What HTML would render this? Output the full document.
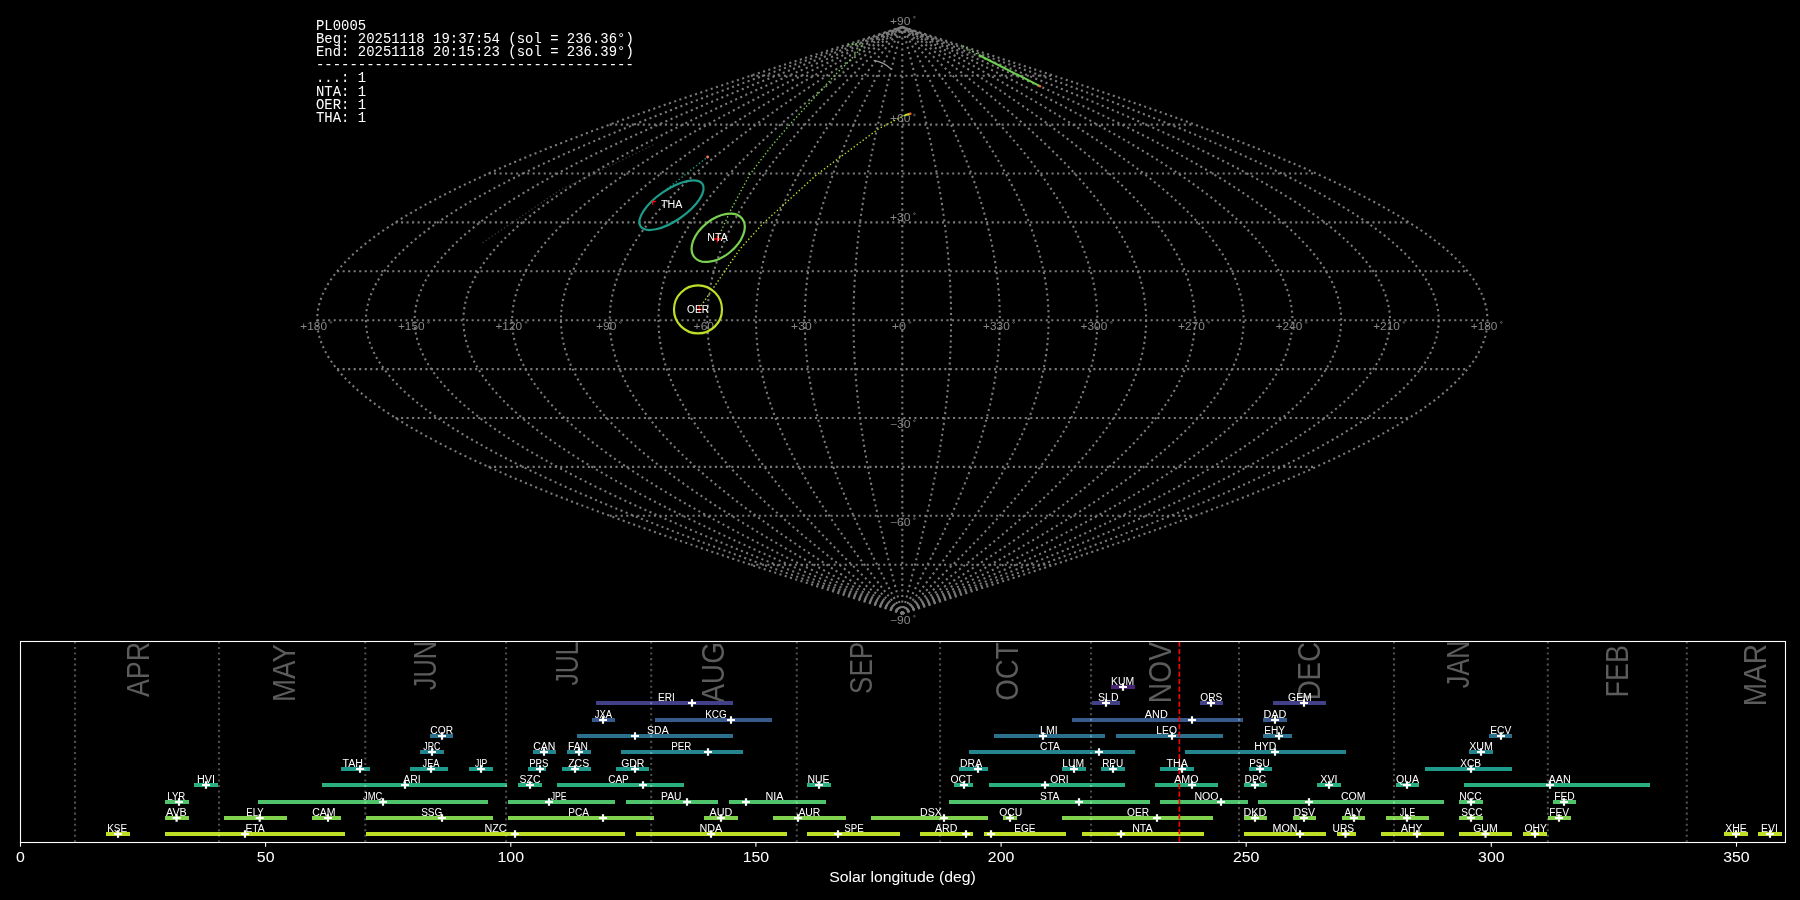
<!DOCTYPE html>
<html><head><meta charset="utf-8"><style>
html,body{margin:0;padding:0;background:#000;width:1800px;height:900px;overflow:hidden}
svg{display:block}
svg{will-change:transform}
</style></head><body>
<svg width="1800" height="900" viewBox="0 0 1800 900">
<rect width="1800" height="900" fill="#000"/>
<g fill="none" stroke="#7a7a7a" stroke-width="2.08" stroke-dasharray="2.08 3.44">
<path d="M902.3,613.6 912.5,610.3 922.7,607.1 932.9,603.8 943.1,600.6 953.3,597.3 963.5,594.0 973.6,590.8 983.7,587.5 993.8,584.3 1003.9,581.0 1014.0,577.7 1024.0,574.5 1033.9,571.2 1043.9,568.0 1053.8,564.7 1063.6,561.4 1073.4,558.2 1083.1,554.9 1092.8,551.7 1102.4,548.4 1112.0,545.1 1121.5,541.9 1130.9,538.6 1140.3,535.4 1149.6,532.1 1158.8,528.8 1168.0,525.6 1177.0,522.3 1186.0,519.1 1194.9,515.8 1203.7,512.5 1212.4,509.3 1221.0,506.0 1229.5,502.8 1237.9,499.5 1246.3,496.2 1254.5,493.0 1262.6,489.7 1270.6,486.5 1278.4,483.2 1286.2,479.9 1293.9,476.7 1301.4,473.4 1308.8,470.2 1316.1,466.9 1323.2,463.6 1330.3,460.4 1337.2,457.1 1343.9,453.9 1350.6,450.6 1357.1,447.3 1363.4,444.1 1369.6,440.8 1375.7,437.6 1381.7,434.3 1387.4,431.0 1393.1,427.8 1398.6,424.5 1403.9,421.3 1409.1,418.0 1414.1,414.7 1419.0,411.5 1423.7,408.2 1428.3,405.0 1432.7,401.7 1436.9,398.4 1441.0,395.2 1444.9,391.9 1448.6,388.7 1452.2,385.4 1455.6,382.1 1458.8,378.9 1461.9,375.6 1464.8,372.4 1467.5,369.1 1470.1,365.8 1472.5,362.6 1474.7,359.3 1476.7,356.1 1478.6,352.8 1480.3,349.5 1481.8,346.3 1483.1,343.0 1484.3,339.8 1485.3,336.5 1486.1,333.2 1486.7,330.0 1487.1,326.7 1487.4,323.5 1487.5,320.2 1487.4,316.9 1487.1,313.7 1486.7,310.4 1486.1,307.2 1485.3,303.9 1484.3,300.6 1483.1,297.4 1481.8,294.1 1480.3,290.9 1478.6,287.6 1476.7,284.3 1474.7,281.1 1472.5,277.8 1470.1,274.6 1467.5,271.3 1464.8,268.0 1461.9,264.8 1458.8,261.5 1455.6,258.3 1452.2,255.0 1448.6,251.7 1444.9,248.5 1441.0,245.2 1436.9,242.0 1432.7,238.7 1428.3,235.4 1423.7,232.2 1419.0,228.9 1414.1,225.7 1409.1,222.4 1403.9,219.1 1398.6,215.9 1393.1,212.6 1387.4,209.4 1381.7,206.1 1375.7,202.8 1369.6,199.6 1363.4,196.3 1357.1,193.1 1350.6,189.8 1343.9,186.5 1337.2,183.3 1330.3,180.0 1323.2,176.8 1316.1,173.5 1308.8,170.2 1301.4,167.0 1293.9,163.7 1286.2,160.5 1278.4,157.2 1270.6,153.9 1262.6,150.7 1254.5,147.4 1246.3,144.2 1237.9,140.9 1229.5,137.6 1221.0,134.4 1212.4,131.1 1203.7,127.9 1194.9,124.6 1186.0,121.3 1177.0,118.1 1168.0,114.8 1158.8,111.6 1149.6,108.3 1140.3,105.0 1130.9,101.8 1121.5,98.5 1112.0,95.3 1102.4,92.0 1092.8,88.7 1083.1,85.5 1073.4,82.2 1063.6,79.0 1053.8,75.7 1043.9,72.4 1033.9,69.2 1024.0,65.9 1014.0,62.7 1003.9,59.4 993.8,56.1 983.7,52.9 973.6,49.6 963.5,46.4 953.3,43.1 943.1,39.8 932.9,36.6 922.7,33.3 912.5,30.1 902.3,26.8"/>
<path d="M902.3,613.6 911.7,610.3 921.0,607.1 930.4,603.8 939.7,600.6 949.1,597.3 958.4,594.0 967.7,590.8 977.0,587.5 986.2,584.3 995.4,581.0 1004.7,577.7 1013.8,574.5 1023.0,571.2 1032.1,568.0 1041.1,564.7 1050.2,561.4 1059.1,558.2 1068.1,554.9 1076.9,551.7 1085.8,548.4 1094.5,545.1 1103.2,541.9 1111.9,538.6 1120.5,535.4 1129.0,532.1 1137.4,528.8 1145.8,525.6 1154.1,522.3 1162.4,519.1 1170.5,515.8 1178.6,512.5 1186.6,509.3 1194.5,506.0 1202.3,502.8 1210.0,499.5 1217.6,496.2 1225.1,493.0 1232.6,489.7 1239.9,486.5 1247.1,483.2 1254.2,479.9 1261.2,476.7 1268.1,473.4 1274.9,470.2 1281.6,466.9 1288.2,463.6 1294.6,460.4 1300.9,457.1 1307.1,453.9 1313.2,450.6 1319.2,447.3 1325.0,444.1 1330.7,440.8 1336.3,437.6 1341.7,434.3 1347.0,431.0 1352.2,427.8 1357.2,424.5 1362.1,421.3 1366.8,418.0 1371.5,414.7 1375.9,411.5 1380.2,408.2 1384.4,405.0 1388.5,401.7 1392.3,398.4 1396.1,395.2 1399.7,391.9 1403.1,388.7 1406.4,385.4 1409.5,382.1 1412.5,378.9 1415.3,375.6 1417.9,372.4 1420.4,369.1 1422.8,365.8 1425.0,362.6 1427.0,359.3 1428.9,356.1 1430.6,352.8 1432.1,349.5 1433.5,346.3 1434.7,343.0 1435.8,339.8 1436.7,336.5 1437.4,333.2 1438.0,330.0 1438.4,326.7 1438.6,323.5 1438.7,320.2 1438.6,316.9 1438.4,313.7 1438.0,310.4 1437.4,307.2 1436.7,303.9 1435.8,300.6 1434.7,297.4 1433.5,294.1 1432.1,290.9 1430.6,287.6 1428.9,284.3 1427.0,281.1 1425.0,277.8 1422.8,274.6 1420.4,271.3 1417.9,268.0 1415.3,264.8 1412.5,261.5 1409.5,258.3 1406.4,255.0 1403.1,251.7 1399.7,248.5 1396.1,245.2 1392.3,242.0 1388.5,238.7 1384.4,235.4 1380.2,232.2 1375.9,228.9 1371.5,225.7 1366.8,222.4 1362.1,219.1 1357.2,215.9 1352.2,212.6 1347.0,209.4 1341.7,206.1 1336.3,202.8 1330.7,199.6 1325.0,196.3 1319.2,193.1 1313.2,189.8 1307.1,186.5 1300.9,183.3 1294.6,180.0 1288.2,176.8 1281.6,173.5 1274.9,170.2 1268.1,167.0 1261.2,163.7 1254.2,160.5 1247.1,157.2 1239.9,153.9 1232.6,150.7 1225.1,147.4 1217.6,144.2 1210.0,140.9 1202.3,137.6 1194.5,134.4 1186.6,131.1 1178.6,127.9 1170.5,124.6 1162.4,121.3 1154.1,118.1 1145.8,114.8 1137.4,111.6 1129.0,108.3 1120.5,105.0 1111.9,101.8 1103.2,98.5 1094.5,95.3 1085.8,92.0 1076.9,88.7 1068.1,85.5 1059.1,82.2 1050.2,79.0 1041.1,75.7 1032.1,72.4 1023.0,69.2 1013.8,65.9 1004.7,62.7 995.4,59.4 986.2,56.1 977.0,52.9 967.7,49.6 958.4,46.4 949.1,43.1 939.7,39.8 930.4,36.6 921.0,33.3 911.7,30.1 902.3,26.8"/>
<path d="M902.3,613.6 910.8,610.3 919.3,607.1 927.8,603.8 936.3,600.6 944.8,597.3 953.3,594.0 961.7,590.8 970.2,587.5 978.6,584.3 987.0,581.0 995.3,577.7 1003.7,574.5 1012.0,571.2 1020.3,568.0 1028.5,564.7 1036.7,561.4 1044.9,558.2 1053.0,554.9 1061.1,551.7 1069.1,548.4 1077.1,545.1 1085.0,541.9 1092.8,538.6 1100.6,535.4 1108.4,532.1 1116.1,528.8 1123.7,525.6 1131.2,522.3 1138.7,519.1 1146.1,515.8 1153.5,512.5 1160.7,509.3 1167.9,506.0 1175.0,502.8 1182.0,499.5 1188.9,496.2 1195.8,493.0 1202.5,489.7 1209.2,486.5 1215.8,483.2 1222.2,479.9 1228.6,476.7 1234.9,473.4 1241.1,470.2 1247.1,466.9 1253.1,463.6 1258.9,460.4 1264.7,457.1 1270.3,453.9 1275.9,450.6 1281.3,447.3 1286.6,444.1 1291.8,440.8 1296.8,437.6 1301.8,434.3 1306.6,431.0 1311.3,427.8 1315.9,424.5 1320.3,421.3 1324.6,418.0 1328.8,414.7 1332.9,411.5 1336.8,408.2 1340.6,405.0 1344.3,401.7 1347.8,398.4 1351.2,395.2 1354.4,391.9 1357.6,388.7 1360.5,385.4 1363.4,382.1 1366.1,378.9 1368.6,375.6 1371.1,372.4 1373.3,369.1 1375.5,365.8 1377.5,362.6 1379.3,359.3 1381.0,356.1 1382.5,352.8 1383.9,349.5 1385.2,346.3 1386.3,343.0 1387.3,339.8 1388.1,336.5 1388.8,333.2 1389.3,330.0 1389.7,326.7 1389.9,323.5 1389.9,320.2 1389.9,316.9 1389.7,313.7 1389.3,310.4 1388.8,307.2 1388.1,303.9 1387.3,300.6 1386.3,297.4 1385.2,294.1 1383.9,290.9 1382.5,287.6 1381.0,284.3 1379.3,281.1 1377.5,277.8 1375.5,274.6 1373.3,271.3 1371.1,268.0 1368.6,264.8 1366.1,261.5 1363.4,258.3 1360.5,255.0 1357.6,251.7 1354.4,248.5 1351.2,245.2 1347.8,242.0 1344.3,238.7 1340.6,235.4 1336.8,232.2 1332.9,228.9 1328.8,225.7 1324.6,222.4 1320.3,219.1 1315.9,215.9 1311.3,212.6 1306.6,209.4 1301.8,206.1 1296.8,202.8 1291.8,199.6 1286.6,196.3 1281.3,193.1 1275.9,189.8 1270.3,186.5 1264.7,183.3 1258.9,180.0 1253.1,176.8 1247.1,173.5 1241.1,170.2 1234.9,167.0 1228.6,163.7 1222.2,160.5 1215.8,157.2 1209.2,153.9 1202.5,150.7 1195.8,147.4 1188.9,144.2 1182.0,140.9 1175.0,137.6 1167.9,134.4 1160.7,131.1 1153.5,127.9 1146.1,124.6 1138.7,121.3 1131.2,118.1 1123.7,114.8 1116.1,111.6 1108.4,108.3 1100.6,105.0 1092.8,101.8 1085.0,98.5 1077.1,95.3 1069.1,92.0 1061.1,88.7 1053.0,85.5 1044.9,82.2 1036.7,79.0 1028.5,75.7 1020.3,72.4 1012.0,69.2 1003.7,65.9 995.3,62.7 987.0,59.4 978.6,56.1 970.2,52.9 961.7,49.6 953.3,46.4 944.8,43.1 936.3,39.8 927.8,36.6 919.3,33.3 910.8,30.1 902.3,26.8"/>
<path d="M902.3,613.6 910.0,610.3 917.6,607.1 925.3,603.8 932.9,600.6 940.6,597.3 948.2,594.0 955.8,590.8 963.4,587.5 971.0,584.3 978.5,581.0 986.0,577.7 993.5,574.5 1001.0,571.2 1008.5,568.0 1015.9,564.7 1023.3,561.4 1030.6,558.2 1037.9,554.9 1045.2,551.7 1052.4,548.4 1059.6,545.1 1066.7,541.9 1073.8,538.6 1080.8,535.4 1087.8,532.1 1094.7,528.8 1101.5,525.6 1108.3,522.3 1115.1,519.1 1121.7,515.8 1128.3,512.5 1134.9,509.3 1141.3,506.0 1147.7,502.8 1154.0,499.5 1160.3,496.2 1166.4,493.0 1172.5,489.7 1178.5,486.5 1184.4,483.2 1190.2,479.9 1196.0,476.7 1201.6,473.4 1207.2,470.2 1212.6,466.9 1218.0,463.6 1223.3,460.4 1228.5,457.1 1233.5,453.9 1238.5,450.6 1243.4,447.3 1248.1,444.1 1252.8,440.8 1257.4,437.6 1261.8,434.3 1266.2,431.0 1270.4,427.8 1274.5,424.5 1278.5,421.3 1282.4,418.0 1286.2,414.7 1289.8,411.5 1293.3,408.2 1296.8,405.0 1300.1,401.7 1303.2,398.4 1306.3,395.2 1309.2,391.9 1312.0,388.7 1314.7,385.4 1317.3,382.1 1319.7,378.9 1322.0,375.6 1324.2,372.4 1326.2,369.1 1328.1,365.8 1329.9,362.6 1331.6,359.3 1333.1,356.1 1334.5,352.8 1335.8,349.5 1336.9,346.3 1337.9,343.0 1338.8,339.8 1339.5,336.5 1340.1,333.2 1340.6,330.0 1340.9,326.7 1341.1,323.5 1341.2,320.2 1341.1,316.9 1340.9,313.7 1340.6,310.4 1340.1,307.2 1339.5,303.9 1338.8,300.6 1337.9,297.4 1336.9,294.1 1335.8,290.9 1334.5,287.6 1333.1,284.3 1331.6,281.1 1329.9,277.8 1328.1,274.6 1326.2,271.3 1324.2,268.0 1322.0,264.8 1319.7,261.5 1317.3,258.3 1314.7,255.0 1312.0,251.7 1309.2,248.5 1306.3,245.2 1303.2,242.0 1300.1,238.7 1296.8,235.4 1293.3,232.2 1289.8,228.9 1286.2,225.7 1282.4,222.4 1278.5,219.1 1274.5,215.9 1270.4,212.6 1266.2,209.4 1261.8,206.1 1257.4,202.8 1252.8,199.6 1248.1,196.3 1243.4,193.1 1238.5,189.8 1233.5,186.5 1228.5,183.3 1223.3,180.0 1218.0,176.8 1212.6,173.5 1207.2,170.2 1201.6,167.0 1196.0,163.7 1190.2,160.5 1184.4,157.2 1178.5,153.9 1172.5,150.7 1166.4,147.4 1160.3,144.2 1154.0,140.9 1147.7,137.6 1141.3,134.4 1134.9,131.1 1128.3,127.9 1121.7,124.6 1115.1,121.3 1108.3,118.1 1101.5,114.8 1094.7,111.6 1087.8,108.3 1080.8,105.0 1073.8,101.8 1066.7,98.5 1059.6,95.3 1052.4,92.0 1045.2,88.7 1037.9,85.5 1030.6,82.2 1023.3,79.0 1015.9,75.7 1008.5,72.4 1001.0,69.2 993.5,65.9 986.0,62.7 978.5,59.4 971.0,56.1 963.4,52.9 955.8,49.6 948.2,46.4 940.6,43.1 932.9,39.8 925.3,36.6 917.6,33.3 910.0,30.1 902.3,26.8"/>
<path d="M902.3,613.6 909.1,610.3 915.9,607.1 922.7,603.8 929.5,600.6 936.3,597.3 943.1,594.0 949.8,590.8 956.6,587.5 963.3,584.3 970.0,581.0 976.7,577.7 983.4,574.5 990.1,571.2 996.7,568.0 1003.3,564.7 1009.8,561.4 1016.4,558.2 1022.9,554.9 1029.3,551.7 1035.7,548.4 1042.1,545.1 1048.4,541.9 1054.7,538.6 1061.0,535.4 1067.2,532.1 1073.3,528.8 1079.4,525.6 1085.5,522.3 1091.4,519.1 1097.4,515.8 1103.2,512.5 1109.0,509.3 1114.8,506.0 1120.5,502.8 1126.1,499.5 1131.6,496.2 1137.1,493.0 1142.5,489.7 1147.8,486.5 1153.1,483.2 1158.2,479.9 1163.3,476.7 1168.4,473.4 1173.3,470.2 1178.2,466.9 1182.9,463.6 1187.6,460.4 1192.2,457.1 1196.7,453.9 1201.1,450.6 1205.5,447.3 1209.7,444.1 1213.9,440.8 1217.9,437.6 1221.9,434.3 1225.7,431.0 1229.5,427.8 1233.1,424.5 1236.7,421.3 1240.2,418.0 1243.5,414.7 1246.8,411.5 1249.9,408.2 1252.9,405.0 1255.9,401.7 1258.7,398.4 1261.4,395.2 1264.0,391.9 1266.5,388.7 1268.9,385.4 1271.2,382.1 1273.3,378.9 1275.4,375.6 1277.3,372.4 1279.1,369.1 1280.8,365.8 1282.4,362.6 1283.9,359.3 1285.3,356.1 1286.5,352.8 1287.6,349.5 1288.6,346.3 1289.5,343.0 1290.3,339.8 1290.9,336.5 1291.5,333.2 1291.9,330.0 1292.2,326.7 1292.4,323.5 1292.4,320.2 1292.4,316.9 1292.2,313.7 1291.9,310.4 1291.5,307.2 1290.9,303.9 1290.3,300.6 1289.5,297.4 1288.6,294.1 1287.6,290.9 1286.5,287.6 1285.3,284.3 1283.9,281.1 1282.4,277.8 1280.8,274.6 1279.1,271.3 1277.3,268.0 1275.4,264.8 1273.3,261.5 1271.2,258.3 1268.9,255.0 1266.5,251.7 1264.0,248.5 1261.4,245.2 1258.7,242.0 1255.9,238.7 1252.9,235.4 1249.9,232.2 1246.8,228.9 1243.5,225.7 1240.2,222.4 1236.7,219.1 1233.1,215.9 1229.5,212.6 1225.7,209.4 1221.9,206.1 1217.9,202.8 1213.9,199.6 1209.7,196.3 1205.5,193.1 1201.1,189.8 1196.7,186.5 1192.2,183.3 1187.6,180.0 1182.9,176.8 1178.2,173.5 1173.3,170.2 1168.4,167.0 1163.3,163.7 1158.2,160.5 1153.1,157.2 1147.8,153.9 1142.5,150.7 1137.1,147.4 1131.6,144.2 1126.1,140.9 1120.5,137.6 1114.8,134.4 1109.0,131.1 1103.2,127.9 1097.4,124.6 1091.4,121.3 1085.5,118.1 1079.4,114.8 1073.3,111.6 1067.2,108.3 1061.0,105.0 1054.7,101.8 1048.4,98.5 1042.1,95.3 1035.7,92.0 1029.3,88.7 1022.9,85.5 1016.4,82.2 1009.8,79.0 1003.3,75.7 996.7,72.4 990.1,69.2 983.4,65.9 976.7,62.7 970.0,59.4 963.3,56.1 956.6,52.9 949.8,49.6 943.1,46.4 936.3,43.1 929.5,39.8 922.7,36.6 915.9,33.3 909.1,30.1 902.3,26.8"/>
<path d="M902.3,613.6 908.3,610.3 914.2,607.1 920.2,603.8 926.1,600.6 932.1,597.3 938.0,594.0 943.9,590.8 949.8,587.5 955.7,584.3 961.6,581.0 967.4,577.7 973.3,574.5 979.1,571.2 984.9,568.0 990.6,564.7 996.4,561.4 1002.1,558.2 1007.8,554.9 1013.4,551.7 1019.1,548.4 1024.6,545.1 1030.2,541.9 1035.7,538.6 1041.1,535.4 1046.6,532.1 1051.9,528.8 1057.3,525.6 1062.6,522.3 1067.8,519.1 1073.0,515.8 1078.1,512.5 1083.2,509.3 1088.2,506.0 1093.2,502.8 1098.1,499.5 1102.9,496.2 1107.7,493.0 1112.5,489.7 1117.1,486.5 1121.7,483.2 1126.2,479.9 1130.7,476.7 1135.1,473.4 1139.4,470.2 1143.7,466.9 1147.9,463.6 1152.0,460.4 1156.0,457.1 1159.9,453.9 1163.8,450.6 1167.6,447.3 1171.3,444.1 1174.9,440.8 1178.5,437.6 1181.9,434.3 1185.3,431.0 1188.6,427.8 1191.8,424.5 1194.9,421.3 1197.9,418.0 1200.9,414.7 1203.7,411.5 1206.4,408.2 1209.1,405.0 1211.7,401.7 1214.1,398.4 1216.5,395.2 1218.8,391.9 1221.0,388.7 1223.1,385.4 1225.1,382.1 1226.9,378.9 1228.7,375.6 1230.4,372.4 1232.0,369.1 1233.5,365.8 1234.9,362.6 1236.2,359.3 1237.4,356.1 1238.5,352.8 1239.5,349.5 1240.3,346.3 1241.1,343.0 1241.8,339.8 1242.4,336.5 1242.8,333.2 1243.2,330.0 1243.4,326.7 1243.6,323.5 1243.7,320.2 1243.6,316.9 1243.4,313.7 1243.2,310.4 1242.8,307.2 1242.4,303.9 1241.8,300.6 1241.1,297.4 1240.3,294.1 1239.5,290.9 1238.5,287.6 1237.4,284.3 1236.2,281.1 1234.9,277.8 1233.5,274.6 1232.0,271.3 1230.4,268.0 1228.7,264.8 1226.9,261.5 1225.1,258.3 1223.1,255.0 1221.0,251.7 1218.8,248.5 1216.5,245.2 1214.1,242.0 1211.7,238.7 1209.1,235.4 1206.4,232.2 1203.7,228.9 1200.9,225.7 1197.9,222.4 1194.9,219.1 1191.8,215.9 1188.6,212.6 1185.3,209.4 1181.9,206.1 1178.5,202.8 1174.9,199.6 1171.3,196.3 1167.6,193.1 1163.8,189.8 1159.9,186.5 1156.0,183.3 1152.0,180.0 1147.9,176.8 1143.7,173.5 1139.4,170.2 1135.1,167.0 1130.7,163.7 1126.2,160.5 1121.7,157.2 1117.1,153.9 1112.5,150.7 1107.7,147.4 1102.9,144.2 1098.1,140.9 1093.2,137.6 1088.2,134.4 1083.2,131.1 1078.1,127.9 1073.0,124.6 1067.8,121.3 1062.6,118.1 1057.3,114.8 1051.9,111.6 1046.6,108.3 1041.1,105.0 1035.7,101.8 1030.2,98.5 1024.6,95.3 1019.1,92.0 1013.4,88.7 1007.8,85.5 1002.1,82.2 996.4,79.0 990.6,75.7 984.9,72.4 979.1,69.2 973.3,65.9 967.4,62.7 961.6,59.4 955.7,56.1 949.8,52.9 943.9,49.6 938.0,46.4 932.1,43.1 926.1,39.8 920.2,36.6 914.2,33.3 908.3,30.1 902.3,26.8"/>
<path d="M902.3,613.6 907.4,610.3 912.5,607.1 917.6,603.8 922.7,600.6 927.8,597.3 932.9,594.0 938.0,590.8 943.0,587.5 948.1,584.3 953.1,581.0 958.1,577.7 963.1,574.5 968.1,571.2 973.1,568.0 978.0,564.7 982.9,561.4 987.8,558.2 992.7,554.9 997.6,551.7 1002.4,548.4 1007.2,545.1 1011.9,541.9 1016.6,538.6 1021.3,535.4 1026.0,532.1 1030.6,528.8 1035.1,525.6 1039.7,522.3 1044.2,519.1 1048.6,515.8 1053.0,512.5 1057.3,509.3 1061.7,506.0 1065.9,502.8 1070.1,499.5 1074.3,496.2 1078.4,493.0 1082.4,489.7 1086.4,486.5 1090.4,483.2 1094.3,479.9 1098.1,476.7 1101.8,473.4 1105.6,470.2 1109.2,466.9 1112.8,463.6 1116.3,460.4 1119.7,457.1 1123.1,453.9 1126.4,450.6 1129.7,447.3 1132.9,444.1 1136.0,440.8 1139.0,437.6 1142.0,434.3 1144.9,431.0 1147.7,427.8 1150.4,424.5 1153.1,421.3 1155.7,418.0 1158.2,414.7 1160.6,411.5 1163.0,408.2 1165.3,405.0 1167.5,401.7 1169.6,398.4 1171.6,395.2 1173.6,391.9 1175.5,388.7 1177.2,385.4 1178.9,382.1 1180.6,378.9 1182.1,375.6 1183.6,372.4 1184.9,369.1 1186.2,365.8 1187.4,362.6 1188.5,359.3 1189.5,356.1 1190.4,352.8 1191.3,349.5 1192.0,346.3 1192.7,343.0 1193.3,339.8 1193.8,336.5 1194.2,333.2 1194.5,330.0 1194.7,326.7 1194.8,323.5 1194.9,320.2 1194.8,316.9 1194.7,313.7 1194.5,310.4 1194.2,307.2 1193.8,303.9 1193.3,300.6 1192.7,297.4 1192.0,294.1 1191.3,290.9 1190.4,287.6 1189.5,284.3 1188.5,281.1 1187.4,277.8 1186.2,274.6 1184.9,271.3 1183.6,268.0 1182.1,264.8 1180.6,261.5 1178.9,258.3 1177.2,255.0 1175.5,251.7 1173.6,248.5 1171.6,245.2 1169.6,242.0 1167.5,238.7 1165.3,235.4 1163.0,232.2 1160.6,228.9 1158.2,225.7 1155.7,222.4 1153.1,219.1 1150.4,215.9 1147.7,212.6 1144.9,209.4 1142.0,206.1 1139.0,202.8 1136.0,199.6 1132.9,196.3 1129.7,193.1 1126.4,189.8 1123.1,186.5 1119.7,183.3 1116.3,180.0 1112.8,176.8 1109.2,173.5 1105.6,170.2 1101.8,167.0 1098.1,163.7 1094.3,160.5 1090.4,157.2 1086.4,153.9 1082.4,150.7 1078.4,147.4 1074.3,144.2 1070.1,140.9 1065.9,137.6 1061.7,134.4 1057.3,131.1 1053.0,127.9 1048.6,124.6 1044.2,121.3 1039.7,118.1 1035.1,114.8 1030.6,111.6 1026.0,108.3 1021.3,105.0 1016.6,101.8 1011.9,98.5 1007.2,95.3 1002.4,92.0 997.6,88.7 992.7,85.5 987.8,82.2 982.9,79.0 978.0,75.7 973.1,72.4 968.1,69.2 963.1,65.9 958.1,62.7 953.1,59.4 948.1,56.1 943.0,52.9 938.0,49.6 932.9,46.4 927.8,43.1 922.7,39.8 917.6,36.6 912.5,33.3 907.4,30.1 902.3,26.8"/>
<path d="M902.3,613.6 906.6,610.3 910.8,607.1 915.1,603.8 919.3,600.6 923.6,597.3 927.8,594.0 932.0,590.8 936.2,587.5 940.4,584.3 944.6,581.0 948.8,577.7 953.0,574.5 957.1,571.2 961.3,568.0 965.4,564.7 969.5,561.4 973.6,558.2 977.6,554.9 981.7,551.7 985.7,548.4 989.7,545.1 993.6,541.9 997.6,538.6 1001.5,535.4 1005.3,532.1 1009.2,528.8 1013.0,525.6 1016.8,522.3 1020.5,519.1 1024.2,515.8 1027.9,512.5 1031.5,509.3 1035.1,506.0 1038.6,502.8 1042.2,499.5 1045.6,496.2 1049.0,493.0 1052.4,489.7 1055.7,486.5 1059.0,483.2 1062.3,479.9 1065.5,476.7 1068.6,473.4 1071.7,470.2 1074.7,466.9 1077.7,463.6 1080.6,460.4 1083.5,457.1 1086.3,453.9 1089.1,450.6 1091.8,447.3 1094.4,444.1 1097.0,440.8 1099.6,437.6 1102.0,434.3 1104.4,431.0 1106.8,427.8 1109.1,424.5 1111.3,421.3 1113.5,418.0 1115.6,414.7 1117.6,411.5 1119.5,408.2 1121.4,405.0 1123.3,401.7 1125.0,398.4 1126.7,395.2 1128.4,391.9 1129.9,388.7 1131.4,385.4 1132.8,382.1 1134.2,378.9 1135.5,375.6 1136.7,372.4 1137.8,369.1 1138.9,365.8 1139.9,362.6 1140.8,359.3 1141.6,356.1 1142.4,352.8 1143.1,349.5 1143.8,346.3 1144.3,343.0 1144.8,339.8 1145.2,336.5 1145.5,333.2 1145.8,330.0 1146.0,326.7 1146.1,323.5 1146.1,320.2 1146.1,316.9 1146.0,313.7 1145.8,310.4 1145.5,307.2 1145.2,303.9 1144.8,300.6 1144.3,297.4 1143.8,294.1 1143.1,290.9 1142.4,287.6 1141.6,284.3 1140.8,281.1 1139.9,277.8 1138.9,274.6 1137.8,271.3 1136.7,268.0 1135.5,264.8 1134.2,261.5 1132.8,258.3 1131.4,255.0 1129.9,251.7 1128.4,248.5 1126.7,245.2 1125.0,242.0 1123.3,238.7 1121.4,235.4 1119.5,232.2 1117.6,228.9 1115.6,225.7 1113.5,222.4 1111.3,219.1 1109.1,215.9 1106.8,212.6 1104.4,209.4 1102.0,206.1 1099.6,202.8 1097.0,199.6 1094.4,196.3 1091.8,193.1 1089.1,189.8 1086.3,186.5 1083.5,183.3 1080.6,180.0 1077.7,176.8 1074.7,173.5 1071.7,170.2 1068.6,167.0 1065.5,163.7 1062.3,160.5 1059.0,157.2 1055.7,153.9 1052.4,150.7 1049.0,147.4 1045.6,144.2 1042.2,140.9 1038.6,137.6 1035.1,134.4 1031.5,131.1 1027.9,127.9 1024.2,124.6 1020.5,121.3 1016.8,118.1 1013.0,114.8 1009.2,111.6 1005.3,108.3 1001.5,105.0 997.6,101.8 993.6,98.5 989.7,95.3 985.7,92.0 981.7,88.7 977.6,85.5 973.6,82.2 969.5,79.0 965.4,75.7 961.3,72.4 957.1,69.2 953.0,65.9 948.8,62.7 944.6,59.4 940.4,56.1 936.2,52.9 932.0,49.6 927.8,46.4 923.6,43.1 919.3,39.8 915.1,36.6 910.8,33.3 906.6,30.1 902.3,26.8"/>
<path d="M902.3,613.6 905.7,610.3 909.1,607.1 912.5,603.8 915.9,600.6 919.3,597.3 922.7,594.0 926.1,590.8 929.4,587.5 932.8,584.3 936.2,581.0 939.5,577.7 942.9,574.5 946.2,571.2 949.5,568.0 952.8,564.7 956.1,561.4 959.3,558.2 962.6,554.9 965.8,551.7 969.0,548.4 972.2,545.1 975.4,541.9 978.5,538.6 981.6,535.4 984.7,532.1 987.8,528.8 990.9,525.6 993.9,522.3 996.9,519.1 999.8,515.8 1002.8,512.5 1005.7,509.3 1008.5,506.0 1011.4,502.8 1014.2,499.5 1017.0,496.2 1019.7,493.0 1022.4,489.7 1025.1,486.5 1027.7,483.2 1030.3,479.9 1032.8,476.7 1035.3,473.4 1037.8,470.2 1040.2,466.9 1042.6,463.6 1045.0,460.4 1047.3,457.1 1049.5,453.9 1051.7,450.6 1053.9,447.3 1056.0,444.1 1058.1,440.8 1060.1,437.6 1062.1,434.3 1064.0,431.0 1065.9,427.8 1067.7,424.5 1069.5,421.3 1071.2,418.0 1072.9,414.7 1074.5,411.5 1076.1,408.2 1077.6,405.0 1079.1,401.7 1080.5,398.4 1081.9,395.2 1083.2,391.9 1084.4,388.7 1085.6,385.4 1086.7,382.1 1087.8,378.9 1088.8,375.6 1089.8,372.4 1090.7,369.1 1091.6,365.8 1092.4,362.6 1093.1,359.3 1093.8,356.1 1094.4,352.8 1095.0,349.5 1095.5,346.3 1095.9,343.0 1096.3,339.8 1096.6,336.5 1096.9,333.2 1097.1,330.0 1097.2,326.7 1097.3,323.5 1097.4,320.2 1097.3,316.9 1097.2,313.7 1097.1,310.4 1096.9,307.2 1096.6,303.9 1096.3,300.6 1095.9,297.4 1095.5,294.1 1095.0,290.9 1094.4,287.6 1093.8,284.3 1093.1,281.1 1092.4,277.8 1091.6,274.6 1090.7,271.3 1089.8,268.0 1088.8,264.8 1087.8,261.5 1086.7,258.3 1085.6,255.0 1084.4,251.7 1083.2,248.5 1081.9,245.2 1080.5,242.0 1079.1,238.7 1077.6,235.4 1076.1,232.2 1074.5,228.9 1072.9,225.7 1071.2,222.4 1069.5,219.1 1067.7,215.9 1065.9,212.6 1064.0,209.4 1062.1,206.1 1060.1,202.8 1058.1,199.6 1056.0,196.3 1053.9,193.1 1051.7,189.8 1049.5,186.5 1047.3,183.3 1045.0,180.0 1042.6,176.8 1040.2,173.5 1037.8,170.2 1035.3,167.0 1032.8,163.7 1030.3,160.5 1027.7,157.2 1025.1,153.9 1022.4,150.7 1019.7,147.4 1017.0,144.2 1014.2,140.9 1011.4,137.6 1008.5,134.4 1005.7,131.1 1002.8,127.9 999.8,124.6 996.9,121.3 993.9,118.1 990.9,114.8 987.8,111.6 984.7,108.3 981.6,105.0 978.5,101.8 975.4,98.5 972.2,95.3 969.0,92.0 965.8,88.7 962.6,85.5 959.3,82.2 956.1,79.0 952.8,75.7 949.5,72.4 946.2,69.2 942.9,65.9 939.5,62.7 936.2,59.4 932.8,56.1 929.4,52.9 926.1,49.6 922.7,46.4 919.3,43.1 915.9,39.8 912.5,36.6 909.1,33.3 905.7,30.1 902.3,26.8"/>
<path d="M902.3,613.6 904.9,610.3 907.4,607.1 910.0,603.8 912.5,600.6 915.1,597.3 917.6,594.0 920.1,590.8 922.7,587.5 925.2,584.3 927.7,581.0 930.2,577.7 932.7,574.5 935.2,571.2 937.7,568.0 940.2,564.7 942.6,561.4 945.1,558.2 947.5,554.9 949.9,551.7 952.3,548.4 954.7,545.1 957.1,541.9 959.5,538.6 961.8,535.4 964.1,532.1 966.4,528.8 968.7,525.6 971.0,522.3 973.2,519.1 975.4,515.8 977.6,512.5 979.8,509.3 982.0,506.0 984.1,502.8 986.2,499.5 988.3,496.2 990.3,493.0 992.4,489.7 994.4,486.5 996.3,483.2 998.3,479.9 1000.2,476.7 1002.1,473.4 1003.9,470.2 1005.7,466.9 1007.5,463.6 1009.3,460.4 1011.0,457.1 1012.7,453.9 1014.4,450.6 1016.0,447.3 1017.6,444.1 1019.1,440.8 1020.7,437.6 1022.1,434.3 1023.6,431.0 1025.0,427.8 1026.4,424.5 1027.7,421.3 1029.0,418.0 1030.3,414.7 1031.5,411.5 1032.6,408.2 1033.8,405.0 1034.9,401.7 1035.9,398.4 1037.0,395.2 1037.9,391.9 1038.9,388.7 1039.8,385.4 1040.6,382.1 1041.4,378.9 1042.2,375.6 1042.9,372.4 1043.6,369.1 1044.2,365.8 1044.8,362.6 1045.4,359.3 1045.9,356.1 1046.4,352.8 1046.8,349.5 1047.2,346.3 1047.5,343.0 1047.8,339.8 1048.0,336.5 1048.2,333.2 1048.4,330.0 1048.5,326.7 1048.6,323.5 1048.6,320.2 1048.6,316.9 1048.5,313.7 1048.4,310.4 1048.2,307.2 1048.0,303.9 1047.8,300.6 1047.5,297.4 1047.2,294.1 1046.8,290.9 1046.4,287.6 1045.9,284.3 1045.4,281.1 1044.8,277.8 1044.2,274.6 1043.6,271.3 1042.9,268.0 1042.2,264.8 1041.4,261.5 1040.6,258.3 1039.8,255.0 1038.9,251.7 1037.9,248.5 1037.0,245.2 1035.9,242.0 1034.9,238.7 1033.8,235.4 1032.6,232.2 1031.5,228.9 1030.3,225.7 1029.0,222.4 1027.7,219.1 1026.4,215.9 1025.0,212.6 1023.6,209.4 1022.1,206.1 1020.7,202.8 1019.1,199.6 1017.6,196.3 1016.0,193.1 1014.4,189.8 1012.7,186.5 1011.0,183.3 1009.3,180.0 1007.5,176.8 1005.7,173.5 1003.9,170.2 1002.1,167.0 1000.2,163.7 998.3,160.5 996.3,157.2 994.4,153.9 992.4,150.7 990.3,147.4 988.3,144.2 986.2,140.9 984.1,137.6 982.0,134.4 979.8,131.1 977.6,127.9 975.4,124.6 973.2,121.3 971.0,118.1 968.7,114.8 966.4,111.6 964.1,108.3 961.8,105.0 959.5,101.8 957.1,98.5 954.7,95.3 952.3,92.0 949.9,88.7 947.5,85.5 945.1,82.2 942.6,79.0 940.2,75.7 937.7,72.4 935.2,69.2 932.7,65.9 930.2,62.7 927.7,59.4 925.2,56.1 922.7,52.9 920.1,49.6 917.6,46.4 915.1,43.1 912.5,39.8 910.0,36.6 907.4,33.3 904.9,30.1 902.3,26.8"/>
<path d="M902.3,613.6 904.0,610.3 905.7,607.1 907.4,603.8 909.1,600.6 910.8,597.3 912.5,594.0 914.2,590.8 915.9,587.5 917.6,584.3 919.2,581.0 920.9,577.7 922.6,574.5 924.2,571.2 925.9,568.0 927.5,564.7 929.2,561.4 930.8,558.2 932.4,554.9 934.1,551.7 935.7,548.4 937.3,545.1 938.8,541.9 940.4,538.6 942.0,535.4 943.5,532.1 945.1,528.8 946.6,525.6 948.1,522.3 949.6,519.1 951.1,515.8 952.5,512.5 954.0,509.3 955.4,506.0 956.8,502.8 958.2,499.5 959.6,496.2 961.0,493.0 962.3,489.7 963.7,486.5 965.0,483.2 966.3,479.9 967.6,476.7 968.8,473.4 970.1,470.2 971.3,466.9 972.5,463.6 973.6,460.4 974.8,457.1 975.9,453.9 977.0,450.6 978.1,447.3 979.2,444.1 980.2,440.8 981.2,437.6 982.2,434.3 983.2,431.0 984.1,427.8 985.0,424.5 985.9,421.3 986.8,418.0 987.6,414.7 988.4,411.5 989.2,408.2 990.0,405.0 990.7,401.7 991.4,398.4 992.1,395.2 992.7,391.9 993.4,388.7 993.9,385.4 994.5,382.1 995.1,378.9 995.6,375.6 996.1,372.4 996.5,369.1 996.9,365.8 997.3,362.6 997.7,359.3 998.0,356.1 998.3,352.8 998.6,349.5 998.9,346.3 999.1,343.0 999.3,339.8 999.5,336.5 999.6,333.2 999.7,330.0 999.8,326.7 999.8,323.5 999.8,320.2 999.8,316.9 999.8,313.7 999.7,310.4 999.6,307.2 999.5,303.9 999.3,300.6 999.1,297.4 998.9,294.1 998.6,290.9 998.3,287.6 998.0,284.3 997.7,281.1 997.3,277.8 996.9,274.6 996.5,271.3 996.1,268.0 995.6,264.8 995.1,261.5 994.5,258.3 993.9,255.0 993.4,251.7 992.7,248.5 992.1,245.2 991.4,242.0 990.7,238.7 990.0,235.4 989.2,232.2 988.4,228.9 987.6,225.7 986.8,222.4 985.9,219.1 985.0,215.9 984.1,212.6 983.2,209.4 982.2,206.1 981.2,202.8 980.2,199.6 979.2,196.3 978.1,193.1 977.0,189.8 975.9,186.5 974.8,183.3 973.6,180.0 972.5,176.8 971.3,173.5 970.1,170.2 968.8,167.0 967.6,163.7 966.3,160.5 965.0,157.2 963.7,153.9 962.3,150.7 961.0,147.4 959.6,144.2 958.2,140.9 956.8,137.6 955.4,134.4 954.0,131.1 952.5,127.9 951.1,124.6 949.6,121.3 948.1,118.1 946.6,114.8 945.1,111.6 943.5,108.3 942.0,105.0 940.4,101.8 938.8,98.5 937.3,95.3 935.7,92.0 934.1,88.7 932.4,85.5 930.8,82.2 929.2,79.0 927.5,75.7 925.9,72.4 924.2,69.2 922.6,65.9 920.9,62.7 919.2,59.4 917.6,56.1 915.9,52.9 914.2,49.6 912.5,46.4 910.8,43.1 909.1,39.8 907.4,36.6 905.7,33.3 904.0,30.1 902.3,26.8"/>
<path d="M902.3,613.6 903.2,610.3 904.0,607.1 904.9,603.8 905.7,600.6 906.6,597.3 907.4,594.0 908.2,590.8 909.1,587.5 909.9,584.3 910.8,581.0 911.6,577.7 912.4,574.5 913.3,571.2 914.1,568.0 914.9,564.7 915.7,561.4 916.6,558.2 917.4,554.9 918.2,551.7 919.0,548.4 919.8,545.1 920.6,541.9 921.4,538.6 922.1,535.4 922.9,532.1 923.7,528.8 924.4,525.6 925.2,522.3 925.9,519.1 926.7,515.8 927.4,512.5 928.1,509.3 928.9,506.0 929.6,502.8 930.3,499.5 931.0,496.2 931.6,493.0 932.3,489.7 933.0,486.5 933.6,483.2 934.3,479.9 934.9,476.7 935.6,473.4 936.2,470.2 936.8,466.9 937.4,463.6 938.0,460.4 938.5,457.1 939.1,453.9 939.7,450.6 940.2,447.3 940.7,444.1 941.2,440.8 941.8,437.6 942.2,434.3 942.7,431.0 943.2,427.8 943.7,424.5 944.1,421.3 944.5,418.0 945.0,414.7 945.4,411.5 945.7,408.2 946.1,405.0 946.5,401.7 946.8,398.4 947.2,395.2 947.5,391.9 947.8,388.7 948.1,385.4 948.4,382.1 948.7,378.9 948.9,375.6 949.2,372.4 949.4,369.1 949.6,365.8 949.8,362.6 950.0,359.3 950.2,356.1 950.3,352.8 950.5,349.5 950.6,346.3 950.7,343.0 950.8,339.8 950.9,336.5 950.9,333.2 951.0,330.0 951.0,326.7 951.1,323.5 951.1,320.2 951.1,316.9 951.0,313.7 951.0,310.4 950.9,307.2 950.9,303.9 950.8,300.6 950.7,297.4 950.6,294.1 950.5,290.9 950.3,287.6 950.2,284.3 950.0,281.1 949.8,277.8 949.6,274.6 949.4,271.3 949.2,268.0 948.9,264.8 948.7,261.5 948.4,258.3 948.1,255.0 947.8,251.7 947.5,248.5 947.2,245.2 946.8,242.0 946.5,238.7 946.1,235.4 945.7,232.2 945.4,228.9 945.0,225.7 944.5,222.4 944.1,219.1 943.7,215.9 943.2,212.6 942.7,209.4 942.2,206.1 941.8,202.8 941.2,199.6 940.7,196.3 940.2,193.1 939.7,189.8 939.1,186.5 938.5,183.3 938.0,180.0 937.4,176.8 936.8,173.5 936.2,170.2 935.6,167.0 934.9,163.7 934.3,160.5 933.6,157.2 933.0,153.9 932.3,150.7 931.6,147.4 931.0,144.2 930.3,140.9 929.6,137.6 928.9,134.4 928.1,131.1 927.4,127.9 926.7,124.6 925.9,121.3 925.2,118.1 924.4,114.8 923.7,111.6 922.9,108.3 922.1,105.0 921.4,101.8 920.6,98.5 919.8,95.3 919.0,92.0 918.2,88.7 917.4,85.5 916.6,82.2 915.7,79.0 914.9,75.7 914.1,72.4 913.3,69.2 912.4,65.9 911.6,62.7 910.8,59.4 909.9,56.1 909.1,52.9 908.2,49.6 907.4,46.4 906.6,43.1 905.7,39.8 904.9,36.6 904.0,33.3 903.2,30.1 902.3,26.8"/>
<path d="M902.3,613.6 902.3,610.3 902.3,607.1 902.3,603.8 902.3,600.6 902.3,597.3 902.3,594.0 902.3,590.8 902.3,587.5 902.3,584.3 902.3,581.0 902.3,577.7 902.3,574.5 902.3,571.2 902.3,568.0 902.3,564.7 902.3,561.4 902.3,558.2 902.3,554.9 902.3,551.7 902.3,548.4 902.3,545.1 902.3,541.9 902.3,538.6 902.3,535.4 902.3,532.1 902.3,528.8 902.3,525.6 902.3,522.3 902.3,519.1 902.3,515.8 902.3,512.5 902.3,509.3 902.3,506.0 902.3,502.8 902.3,499.5 902.3,496.2 902.3,493.0 902.3,489.7 902.3,486.5 902.3,483.2 902.3,479.9 902.3,476.7 902.3,473.4 902.3,470.2 902.3,466.9 902.3,463.6 902.3,460.4 902.3,457.1 902.3,453.9 902.3,450.6 902.3,447.3 902.3,444.1 902.3,440.8 902.3,437.6 902.3,434.3 902.3,431.0 902.3,427.8 902.3,424.5 902.3,421.3 902.3,418.0 902.3,414.7 902.3,411.5 902.3,408.2 902.3,405.0 902.3,401.7 902.3,398.4 902.3,395.2 902.3,391.9 902.3,388.7 902.3,385.4 902.3,382.1 902.3,378.9 902.3,375.6 902.3,372.4 902.3,369.1 902.3,365.8 902.3,362.6 902.3,359.3 902.3,356.1 902.3,352.8 902.3,349.5 902.3,346.3 902.3,343.0 902.3,339.8 902.3,336.5 902.3,333.2 902.3,330.0 902.3,326.7 902.3,323.5 902.3,320.2 902.3,316.9 902.3,313.7 902.3,310.4 902.3,307.2 902.3,303.9 902.3,300.6 902.3,297.4 902.3,294.1 902.3,290.9 902.3,287.6 902.3,284.3 902.3,281.1 902.3,277.8 902.3,274.6 902.3,271.3 902.3,268.0 902.3,264.8 902.3,261.5 902.3,258.3 902.3,255.0 902.3,251.7 902.3,248.5 902.3,245.2 902.3,242.0 902.3,238.7 902.3,235.4 902.3,232.2 902.3,228.9 902.3,225.7 902.3,222.4 902.3,219.1 902.3,215.9 902.3,212.6 902.3,209.4 902.3,206.1 902.3,202.8 902.3,199.6 902.3,196.3 902.3,193.1 902.3,189.8 902.3,186.5 902.3,183.3 902.3,180.0 902.3,176.8 902.3,173.5 902.3,170.2 902.3,167.0 902.3,163.7 902.3,160.5 902.3,157.2 902.3,153.9 902.3,150.7 902.3,147.4 902.3,144.2 902.3,140.9 902.3,137.6 902.3,134.4 902.3,131.1 902.3,127.9 902.3,124.6 902.3,121.3 902.3,118.1 902.3,114.8 902.3,111.6 902.3,108.3 902.3,105.0 902.3,101.8 902.3,98.5 902.3,95.3 902.3,92.0 902.3,88.7 902.3,85.5 902.3,82.2 902.3,79.0 902.3,75.7 902.3,72.4 902.3,69.2 902.3,65.9 902.3,62.7 902.3,59.4 902.3,56.1 902.3,52.9 902.3,49.6 902.3,46.4 902.3,43.1 902.3,39.8 902.3,36.6 902.3,33.3 902.3,30.1 902.3,26.8"/>
<path d="M902.3,613.6 901.4,610.3 900.6,607.1 899.7,603.8 898.9,600.6 898.0,597.3 897.2,594.0 896.4,590.8 895.5,587.5 894.7,584.3 893.8,581.0 893.0,577.7 892.2,574.5 891.3,571.2 890.5,568.0 889.7,564.7 888.9,561.4 888.0,558.2 887.2,554.9 886.4,551.7 885.6,548.4 884.8,545.1 884.0,541.9 883.2,538.6 882.5,535.4 881.7,532.1 880.9,528.8 880.2,525.6 879.4,522.3 878.7,519.1 877.9,515.8 877.2,512.5 876.5,509.3 875.7,506.0 875.0,502.8 874.3,499.5 873.6,496.2 873.0,493.0 872.3,489.7 871.6,486.5 871.0,483.2 870.3,479.9 869.7,476.7 869.0,473.4 868.4,470.2 867.8,466.9 867.2,463.6 866.6,460.4 866.1,457.1 865.5,453.9 864.9,450.6 864.4,447.3 863.9,444.1 863.4,440.8 862.8,437.6 862.4,434.3 861.9,431.0 861.4,427.8 860.9,424.5 860.5,421.3 860.1,418.0 859.6,414.7 859.2,411.5 858.9,408.2 858.5,405.0 858.1,401.7 857.8,398.4 857.4,395.2 857.1,391.9 856.8,388.7 856.5,385.4 856.2,382.1 855.9,378.9 855.7,375.6 855.4,372.4 855.2,369.1 855.0,365.8 854.8,362.6 854.6,359.3 854.4,356.1 854.3,352.8 854.1,349.5 854.0,346.3 853.9,343.0 853.8,339.8 853.7,336.5 853.7,333.2 853.6,330.0 853.6,326.7 853.5,323.5 853.5,320.2 853.5,316.9 853.6,313.7 853.6,310.4 853.7,307.2 853.7,303.9 853.8,300.6 853.9,297.4 854.0,294.1 854.1,290.9 854.3,287.6 854.4,284.3 854.6,281.1 854.8,277.8 855.0,274.6 855.2,271.3 855.4,268.0 855.7,264.8 855.9,261.5 856.2,258.3 856.5,255.0 856.8,251.7 857.1,248.5 857.4,245.2 857.8,242.0 858.1,238.7 858.5,235.4 858.9,232.2 859.2,228.9 859.6,225.7 860.1,222.4 860.5,219.1 860.9,215.9 861.4,212.6 861.9,209.4 862.4,206.1 862.8,202.8 863.4,199.6 863.9,196.3 864.4,193.1 864.9,189.8 865.5,186.5 866.1,183.3 866.6,180.0 867.2,176.8 867.8,173.5 868.4,170.2 869.0,167.0 869.7,163.7 870.3,160.5 871.0,157.2 871.6,153.9 872.3,150.7 873.0,147.4 873.6,144.2 874.3,140.9 875.0,137.6 875.7,134.4 876.5,131.1 877.2,127.9 877.9,124.6 878.7,121.3 879.4,118.1 880.2,114.8 880.9,111.6 881.7,108.3 882.5,105.0 883.2,101.8 884.0,98.5 884.8,95.3 885.6,92.0 886.4,88.7 887.2,85.5 888.0,82.2 888.9,79.0 889.7,75.7 890.5,72.4 891.3,69.2 892.2,65.9 893.0,62.7 893.8,59.4 894.7,56.1 895.5,52.9 896.4,49.6 897.2,46.4 898.0,43.1 898.9,39.8 899.7,36.6 900.6,33.3 901.4,30.1 902.3,26.8"/>
<path d="M902.3,613.6 900.6,610.3 898.9,607.1 897.2,603.8 895.5,600.6 893.8,597.3 892.1,594.0 890.4,590.8 888.7,587.5 887.0,584.3 885.4,581.0 883.7,577.7 882.0,574.5 880.4,571.2 878.7,568.0 877.1,564.7 875.4,561.4 873.8,558.2 872.2,554.9 870.5,551.7 868.9,548.4 867.3,545.1 865.8,541.9 864.2,538.6 862.6,535.4 861.1,532.1 859.5,528.8 858.0,525.6 856.5,522.3 855.0,519.1 853.5,515.8 852.1,512.5 850.6,509.3 849.2,506.0 847.8,502.8 846.4,499.5 845.0,496.2 843.6,493.0 842.3,489.7 840.9,486.5 839.6,483.2 838.3,479.9 837.0,476.7 835.8,473.4 834.5,470.2 833.3,466.9 832.1,463.6 831.0,460.4 829.8,457.1 828.7,453.9 827.6,450.6 826.5,447.3 825.4,444.1 824.4,440.8 823.4,437.6 822.4,434.3 821.4,431.0 820.5,427.8 819.6,424.5 818.7,421.3 817.8,418.0 817.0,414.7 816.2,411.5 815.4,408.2 814.6,405.0 813.9,401.7 813.2,398.4 812.5,395.2 811.9,391.9 811.2,388.7 810.7,385.4 810.1,382.1 809.5,378.9 809.0,375.6 808.5,372.4 808.1,369.1 807.7,365.8 807.3,362.6 806.9,359.3 806.6,356.1 806.3,352.8 806.0,349.5 805.7,346.3 805.5,343.0 805.3,339.8 805.1,336.5 805.0,333.2 804.9,330.0 804.8,326.7 804.8,323.5 804.8,320.2 804.8,316.9 804.8,313.7 804.9,310.4 805.0,307.2 805.1,303.9 805.3,300.6 805.5,297.4 805.7,294.1 806.0,290.9 806.3,287.6 806.6,284.3 806.9,281.1 807.3,277.8 807.7,274.6 808.1,271.3 808.5,268.0 809.0,264.8 809.5,261.5 810.1,258.3 810.7,255.0 811.2,251.7 811.9,248.5 812.5,245.2 813.2,242.0 813.9,238.7 814.6,235.4 815.4,232.2 816.2,228.9 817.0,225.7 817.8,222.4 818.7,219.1 819.6,215.9 820.5,212.6 821.4,209.4 822.4,206.1 823.4,202.8 824.4,199.6 825.4,196.3 826.5,193.1 827.6,189.8 828.7,186.5 829.8,183.3 831.0,180.0 832.1,176.8 833.3,173.5 834.5,170.2 835.8,167.0 837.0,163.7 838.3,160.5 839.6,157.2 840.9,153.9 842.3,150.7 843.6,147.4 845.0,144.2 846.4,140.9 847.8,137.6 849.2,134.4 850.6,131.1 852.1,127.9 853.5,124.6 855.0,121.3 856.5,118.1 858.0,114.8 859.5,111.6 861.1,108.3 862.6,105.0 864.2,101.8 865.8,98.5 867.3,95.3 868.9,92.0 870.5,88.7 872.2,85.5 873.8,82.2 875.4,79.0 877.1,75.7 878.7,72.4 880.4,69.2 882.0,65.9 883.7,62.7 885.4,59.4 887.0,56.1 888.7,52.9 890.4,49.6 892.1,46.4 893.8,43.1 895.5,39.8 897.2,36.6 898.9,33.3 900.6,30.1 902.3,26.8"/>
<path d="M902.3,613.6 899.7,610.3 897.2,607.1 894.6,603.8 892.1,600.6 889.5,597.3 887.0,594.0 884.5,590.8 881.9,587.5 879.4,584.3 876.9,581.0 874.4,577.7 871.9,574.5 869.4,571.2 866.9,568.0 864.4,564.7 862.0,561.4 859.5,558.2 857.1,554.9 854.7,551.7 852.3,548.4 849.9,545.1 847.5,541.9 845.1,538.6 842.8,535.4 840.5,532.1 838.2,528.8 835.9,525.6 833.6,522.3 831.4,519.1 829.2,515.8 827.0,512.5 824.8,509.3 822.6,506.0 820.5,502.8 818.4,499.5 816.3,496.2 814.3,493.0 812.2,489.7 810.2,486.5 808.3,483.2 806.3,479.9 804.4,476.7 802.5,473.4 800.7,470.2 798.9,466.9 797.1,463.6 795.3,460.4 793.6,457.1 791.9,453.9 790.2,450.6 788.6,447.3 787.0,444.1 785.5,440.8 783.9,437.6 782.5,434.3 781.0,431.0 779.6,427.8 778.2,424.5 776.9,421.3 775.6,418.0 774.3,414.7 773.1,411.5 772.0,408.2 770.8,405.0 769.7,401.7 768.7,398.4 767.6,395.2 766.7,391.9 765.7,388.7 764.8,385.4 764.0,382.1 763.2,378.9 762.4,375.6 761.7,372.4 761.0,369.1 760.4,365.8 759.8,362.6 759.2,359.3 758.7,356.1 758.2,352.8 757.8,349.5 757.4,346.3 757.1,343.0 756.8,339.8 756.6,336.5 756.4,333.2 756.2,330.0 756.1,326.7 756.0,323.5 756.0,320.2 756.0,316.9 756.1,313.7 756.2,310.4 756.4,307.2 756.6,303.9 756.8,300.6 757.1,297.4 757.4,294.1 757.8,290.9 758.2,287.6 758.7,284.3 759.2,281.1 759.8,277.8 760.4,274.6 761.0,271.3 761.7,268.0 762.4,264.8 763.2,261.5 764.0,258.3 764.8,255.0 765.7,251.7 766.7,248.5 767.6,245.2 768.7,242.0 769.7,238.7 770.8,235.4 772.0,232.2 773.1,228.9 774.3,225.7 775.6,222.4 776.9,219.1 778.2,215.9 779.6,212.6 781.0,209.4 782.5,206.1 783.9,202.8 785.5,199.6 787.0,196.3 788.6,193.1 790.2,189.8 791.9,186.5 793.6,183.3 795.3,180.0 797.1,176.8 798.9,173.5 800.7,170.2 802.5,167.0 804.4,163.7 806.3,160.5 808.3,157.2 810.2,153.9 812.2,150.7 814.3,147.4 816.3,144.2 818.4,140.9 820.5,137.6 822.6,134.4 824.8,131.1 827.0,127.9 829.2,124.6 831.4,121.3 833.6,118.1 835.9,114.8 838.2,111.6 840.5,108.3 842.8,105.0 845.1,101.8 847.5,98.5 849.9,95.3 852.3,92.0 854.7,88.7 857.1,85.5 859.5,82.2 862.0,79.0 864.4,75.7 866.9,72.4 869.4,69.2 871.9,65.9 874.4,62.7 876.9,59.4 879.4,56.1 881.9,52.9 884.5,49.6 887.0,46.4 889.5,43.1 892.1,39.8 894.6,36.6 897.2,33.3 899.7,30.1 902.3,26.8"/>
<path d="M902.3,613.6 898.9,610.3 895.5,607.1 892.1,603.8 888.7,600.6 885.3,597.3 881.9,594.0 878.5,590.8 875.2,587.5 871.8,584.3 868.4,581.0 865.1,577.7 861.7,574.5 858.4,571.2 855.1,568.0 851.8,564.7 848.5,561.4 845.3,558.2 842.0,554.9 838.8,551.7 835.6,548.4 832.4,545.1 829.2,541.9 826.1,538.6 823.0,535.4 819.9,532.1 816.8,528.8 813.7,525.6 810.7,522.3 807.7,519.1 804.8,515.8 801.8,512.5 798.9,509.3 796.1,506.0 793.2,502.8 790.4,499.5 787.6,496.2 784.9,493.0 782.2,489.7 779.5,486.5 776.9,483.2 774.3,479.9 771.8,476.7 769.3,473.4 766.8,470.2 764.4,466.9 762.0,463.6 759.6,460.4 757.3,457.1 755.1,453.9 752.9,450.6 750.7,447.3 748.6,444.1 746.5,440.8 744.5,437.6 742.5,434.3 740.6,431.0 738.7,427.8 736.9,424.5 735.1,421.3 733.4,418.0 731.7,414.7 730.1,411.5 728.5,408.2 727.0,405.0 725.5,401.7 724.1,398.4 722.7,395.2 721.4,391.9 720.2,388.7 719.0,385.4 717.9,382.1 716.8,378.9 715.8,375.6 714.8,372.4 713.9,369.1 713.0,365.8 712.2,362.6 711.5,359.3 710.8,356.1 710.2,352.8 709.6,349.5 709.1,346.3 708.7,343.0 708.3,339.8 708.0,336.5 707.7,333.2 707.5,330.0 707.4,326.7 707.3,323.5 707.2,320.2 707.3,316.9 707.4,313.7 707.5,310.4 707.7,307.2 708.0,303.9 708.3,300.6 708.7,297.4 709.1,294.1 709.6,290.9 710.2,287.6 710.8,284.3 711.5,281.1 712.2,277.8 713.0,274.6 713.9,271.3 714.8,268.0 715.8,264.8 716.8,261.5 717.9,258.3 719.0,255.0 720.2,251.7 721.4,248.5 722.7,245.2 724.1,242.0 725.5,238.7 727.0,235.4 728.5,232.2 730.1,228.9 731.7,225.7 733.4,222.4 735.1,219.1 736.9,215.9 738.7,212.6 740.6,209.4 742.5,206.1 744.5,202.8 746.5,199.6 748.6,196.3 750.7,193.1 752.9,189.8 755.1,186.5 757.3,183.3 759.6,180.0 762.0,176.8 764.4,173.5 766.8,170.2 769.3,167.0 771.8,163.7 774.3,160.5 776.9,157.2 779.5,153.9 782.2,150.7 784.9,147.4 787.6,144.2 790.4,140.9 793.2,137.6 796.1,134.4 798.9,131.1 801.8,127.9 804.8,124.6 807.7,121.3 810.7,118.1 813.7,114.8 816.8,111.6 819.9,108.3 823.0,105.0 826.1,101.8 829.2,98.5 832.4,95.3 835.6,92.0 838.8,88.7 842.0,85.5 845.3,82.2 848.5,79.0 851.8,75.7 855.1,72.4 858.4,69.2 861.7,65.9 865.1,62.7 868.4,59.4 871.8,56.1 875.2,52.9 878.5,49.6 881.9,46.4 885.3,43.1 888.7,39.8 892.1,36.6 895.5,33.3 898.9,30.1 902.3,26.8"/>
<path d="M902.3,613.6 898.0,610.3 893.8,607.1 889.5,603.8 885.3,600.6 881.0,597.3 876.8,594.0 872.6,590.8 868.4,587.5 864.2,584.3 860.0,581.0 855.8,577.7 851.6,574.5 847.5,571.2 843.3,568.0 839.2,564.7 835.1,561.4 831.0,558.2 827.0,554.9 822.9,551.7 818.9,548.4 814.9,545.1 811.0,541.9 807.0,538.6 803.1,535.4 799.3,532.1 795.4,528.8 791.6,525.6 787.8,522.3 784.1,519.1 780.4,515.8 776.7,512.5 773.1,509.3 769.5,506.0 766.0,502.8 762.4,499.5 759.0,496.2 755.6,493.0 752.2,489.7 748.9,486.5 745.6,483.2 742.3,479.9 739.1,476.7 736.0,473.4 732.9,470.2 729.9,466.9 726.9,463.6 724.0,460.4 721.1,457.1 718.3,453.9 715.5,450.6 712.8,447.3 710.2,444.1 707.6,440.8 705.0,437.6 702.6,434.3 700.2,431.0 697.8,427.8 695.5,424.5 693.3,421.3 691.1,418.0 689.0,414.7 687.0,411.5 685.1,408.2 683.2,405.0 681.3,401.7 679.6,398.4 677.9,395.2 676.2,391.9 674.7,388.7 673.2,385.4 671.8,382.1 670.4,378.9 669.1,375.6 667.9,372.4 666.8,369.1 665.7,365.8 664.7,362.6 663.8,359.3 663.0,356.1 662.2,352.8 661.5,349.5 660.8,346.3 660.3,343.0 659.8,339.8 659.4,336.5 659.1,333.2 658.8,330.0 658.6,326.7 658.5,323.5 658.5,320.2 658.5,316.9 658.6,313.7 658.8,310.4 659.1,307.2 659.4,303.9 659.8,300.6 660.3,297.4 660.8,294.1 661.5,290.9 662.2,287.6 663.0,284.3 663.8,281.1 664.7,277.8 665.7,274.6 666.8,271.3 667.9,268.0 669.1,264.8 670.4,261.5 671.8,258.3 673.2,255.0 674.7,251.7 676.2,248.5 677.9,245.2 679.6,242.0 681.3,238.7 683.2,235.4 685.1,232.2 687.0,228.9 689.0,225.7 691.1,222.4 693.3,219.1 695.5,215.9 697.8,212.6 700.2,209.4 702.6,206.1 705.0,202.8 707.6,199.6 710.2,196.3 712.8,193.1 715.5,189.8 718.3,186.5 721.1,183.3 724.0,180.0 726.9,176.8 729.9,173.5 732.9,170.2 736.0,167.0 739.1,163.7 742.3,160.5 745.6,157.2 748.9,153.9 752.2,150.7 755.6,147.4 759.0,144.2 762.4,140.9 766.0,137.6 769.5,134.4 773.1,131.1 776.7,127.9 780.4,124.6 784.1,121.3 787.8,118.1 791.6,114.8 795.4,111.6 799.3,108.3 803.1,105.0 807.0,101.8 811.0,98.5 814.9,95.3 818.9,92.0 822.9,88.7 827.0,85.5 831.0,82.2 835.1,79.0 839.2,75.7 843.3,72.4 847.5,69.2 851.6,65.9 855.8,62.7 860.0,59.4 864.2,56.1 868.4,52.9 872.6,49.6 876.8,46.4 881.0,43.1 885.3,39.8 889.5,36.6 893.8,33.3 898.0,30.1 902.3,26.8"/>
<path d="M902.3,613.6 897.2,610.3 892.1,607.1 887.0,603.8 881.9,600.6 876.8,597.3 871.7,594.0 866.6,590.8 861.6,587.5 856.5,584.3 851.5,581.0 846.5,577.7 841.5,574.5 836.5,571.2 831.5,568.0 826.6,564.7 821.7,561.4 816.8,558.2 811.9,554.9 807.0,551.7 802.2,548.4 797.4,545.1 792.7,541.9 788.0,538.6 783.3,535.4 778.6,532.1 774.0,528.8 769.5,525.6 764.9,522.3 760.4,519.1 756.0,515.8 751.6,512.5 747.3,509.3 742.9,506.0 738.7,502.8 734.5,499.5 730.3,496.2 726.2,493.0 722.2,489.7 718.2,486.5 714.2,483.2 710.3,479.9 706.5,476.7 702.8,473.4 699.0,470.2 695.4,466.9 691.8,463.6 688.3,460.4 684.9,457.1 681.5,453.9 678.2,450.6 674.9,447.3 671.7,444.1 668.6,440.8 665.6,437.6 662.6,434.3 659.7,431.0 656.9,427.8 654.2,424.5 651.5,421.3 648.9,418.0 646.4,414.7 644.0,411.5 641.6,408.2 639.3,405.0 637.1,401.7 635.0,398.4 633.0,395.2 631.0,391.9 629.1,388.7 627.4,385.4 625.7,382.1 624.0,378.9 622.5,375.6 621.0,372.4 619.7,369.1 618.4,365.8 617.2,362.6 616.1,359.3 615.1,356.1 614.2,352.8 613.3,349.5 612.6,346.3 611.9,343.0 611.3,339.8 610.8,336.5 610.4,333.2 610.1,330.0 609.9,326.7 609.8,323.5 609.7,320.2 609.8,316.9 609.9,313.7 610.1,310.4 610.4,307.2 610.8,303.9 611.3,300.6 611.9,297.4 612.6,294.1 613.3,290.9 614.2,287.6 615.1,284.3 616.1,281.1 617.2,277.8 618.4,274.6 619.7,271.3 621.0,268.0 622.5,264.8 624.0,261.5 625.7,258.3 627.4,255.0 629.1,251.7 631.0,248.5 633.0,245.2 635.0,242.0 637.1,238.7 639.3,235.4 641.6,232.2 644.0,228.9 646.4,225.7 648.9,222.4 651.5,219.1 654.2,215.9 656.9,212.6 659.7,209.4 662.6,206.1 665.6,202.8 668.6,199.6 671.7,196.3 674.9,193.1 678.2,189.8 681.5,186.5 684.9,183.3 688.3,180.0 691.8,176.8 695.4,173.5 699.0,170.2 702.8,167.0 706.5,163.7 710.3,160.5 714.2,157.2 718.2,153.9 722.2,150.7 726.2,147.4 730.3,144.2 734.5,140.9 738.7,137.6 742.9,134.4 747.3,131.1 751.6,127.9 756.0,124.6 760.4,121.3 764.9,118.1 769.5,114.8 774.0,111.6 778.6,108.3 783.3,105.0 788.0,101.8 792.7,98.5 797.4,95.3 802.2,92.0 807.0,88.7 811.9,85.5 816.8,82.2 821.7,79.0 826.6,75.7 831.5,72.4 836.5,69.2 841.5,65.9 846.5,62.7 851.5,59.4 856.5,56.1 861.6,52.9 866.6,49.6 871.7,46.4 876.8,43.1 881.9,39.8 887.0,36.6 892.1,33.3 897.2,30.1 902.3,26.8"/>
<path d="M902.3,613.6 896.3,610.3 890.4,607.1 884.4,603.8 878.5,600.6 872.5,597.3 866.6,594.0 860.7,590.8 854.8,587.5 848.9,584.3 843.0,581.0 837.2,577.7 831.3,574.5 825.5,571.2 819.7,568.0 814.0,564.7 808.2,561.4 802.5,558.2 796.8,554.9 791.2,551.7 785.5,548.4 780.0,545.1 774.4,541.9 768.9,538.6 763.5,535.4 758.0,532.1 752.7,528.8 747.3,525.6 742.0,522.3 736.8,519.1 731.6,515.8 726.5,512.5 721.4,509.3 716.4,506.0 711.4,502.8 706.5,499.5 701.7,496.2 696.9,493.0 692.1,489.7 687.5,486.5 682.9,483.2 678.4,479.9 673.9,476.7 669.5,473.4 665.2,470.2 660.9,466.9 656.7,463.6 652.6,460.4 648.6,457.1 644.7,453.9 640.8,450.6 637.0,447.3 633.3,444.1 629.7,440.8 626.1,437.6 622.7,434.3 619.3,431.0 616.0,427.8 612.8,424.5 609.7,421.3 606.7,418.0 603.7,414.7 600.9,411.5 598.2,408.2 595.5,405.0 592.9,401.7 590.5,398.4 588.1,395.2 585.8,391.9 583.6,388.7 581.5,385.4 579.5,382.1 577.7,378.9 575.9,375.6 574.2,372.4 572.6,369.1 571.1,365.8 569.7,362.6 568.4,359.3 567.2,356.1 566.1,352.8 565.1,349.5 564.3,346.3 563.5,343.0 562.8,339.8 562.2,336.5 561.8,333.2 561.4,330.0 561.2,326.7 561.0,323.5 560.9,320.2 561.0,316.9 561.2,313.7 561.4,310.4 561.8,307.2 562.2,303.9 562.8,300.6 563.5,297.4 564.3,294.1 565.1,290.9 566.1,287.6 567.2,284.3 568.4,281.1 569.7,277.8 571.1,274.6 572.6,271.3 574.2,268.0 575.9,264.8 577.7,261.5 579.5,258.3 581.5,255.0 583.6,251.7 585.8,248.5 588.1,245.2 590.5,242.0 592.9,238.7 595.5,235.4 598.2,232.2 600.9,228.9 603.7,225.7 606.7,222.4 609.7,219.1 612.8,215.9 616.0,212.6 619.3,209.4 622.7,206.1 626.1,202.8 629.7,199.6 633.3,196.3 637.0,193.1 640.8,189.8 644.7,186.5 648.6,183.3 652.6,180.0 656.7,176.8 660.9,173.5 665.2,170.2 669.5,167.0 673.9,163.7 678.4,160.5 682.9,157.2 687.5,153.9 692.1,150.7 696.9,147.4 701.7,144.2 706.5,140.9 711.4,137.6 716.4,134.4 721.4,131.1 726.5,127.9 731.6,124.6 736.8,121.3 742.0,118.1 747.3,114.8 752.7,111.6 758.0,108.3 763.5,105.0 768.9,101.8 774.4,98.5 780.0,95.3 785.5,92.0 791.2,88.7 796.8,85.5 802.5,82.2 808.2,79.0 814.0,75.7 819.7,72.4 825.5,69.2 831.3,65.9 837.2,62.7 843.0,59.4 848.9,56.1 854.8,52.9 860.7,49.6 866.6,46.4 872.5,43.1 878.5,39.8 884.4,36.6 890.4,33.3 896.3,30.1 902.3,26.8"/>
<path d="M902.3,613.6 895.5,610.3 888.7,607.1 881.9,603.8 875.1,600.6 868.3,597.3 861.5,594.0 854.8,590.8 848.0,587.5 841.3,584.3 834.6,581.0 827.9,577.7 821.2,574.5 814.5,571.2 807.9,568.0 801.3,564.7 794.8,561.4 788.2,558.2 781.7,554.9 775.3,551.7 768.9,548.4 762.5,545.1 756.2,541.9 749.9,538.6 743.6,535.4 737.4,532.1 731.3,528.8 725.2,525.6 719.1,522.3 713.2,519.1 707.2,515.8 701.4,512.5 695.6,509.3 689.8,506.0 684.1,502.8 678.5,499.5 673.0,496.2 667.5,493.0 662.1,489.7 656.8,486.5 651.5,483.2 646.4,479.9 641.3,476.7 636.2,473.4 631.3,470.2 626.4,466.9 621.7,463.6 617.0,460.4 612.4,457.1 607.9,453.9 603.5,450.6 599.1,447.3 594.9,444.1 590.7,440.8 586.7,437.6 582.7,434.3 578.9,431.0 575.1,427.8 571.5,424.5 567.9,421.3 564.4,418.0 561.1,414.7 557.8,411.5 554.7,408.2 551.7,405.0 548.7,401.7 545.9,398.4 543.2,395.2 540.6,391.9 538.1,388.7 535.7,385.4 533.4,382.1 531.3,378.9 529.2,375.6 527.3,372.4 525.5,369.1 523.8,365.8 522.2,362.6 520.7,359.3 519.3,356.1 518.1,352.8 517.0,349.5 516.0,346.3 515.1,343.0 514.3,339.8 513.7,336.5 513.1,333.2 512.7,330.0 512.4,326.7 512.2,323.5 512.2,320.2 512.2,316.9 512.4,313.7 512.7,310.4 513.1,307.2 513.7,303.9 514.3,300.6 515.1,297.4 516.0,294.1 517.0,290.9 518.1,287.6 519.3,284.3 520.7,281.1 522.2,277.8 523.8,274.6 525.5,271.3 527.3,268.0 529.2,264.8 531.3,261.5 533.4,258.3 535.7,255.0 538.1,251.7 540.6,248.5 543.2,245.2 545.9,242.0 548.7,238.7 551.7,235.4 554.7,232.2 557.8,228.9 561.1,225.7 564.4,222.4 567.9,219.1 571.5,215.9 575.1,212.6 578.9,209.4 582.7,206.1 586.7,202.8 590.7,199.6 594.9,196.3 599.1,193.1 603.5,189.8 607.9,186.5 612.4,183.3 617.0,180.0 621.7,176.8 626.4,173.5 631.3,170.2 636.2,167.0 641.3,163.7 646.4,160.5 651.5,157.2 656.8,153.9 662.1,150.7 667.5,147.4 673.0,144.2 678.5,140.9 684.1,137.6 689.8,134.4 695.6,131.1 701.4,127.9 707.2,124.6 713.2,121.3 719.1,118.1 725.2,114.8 731.3,111.6 737.4,108.3 743.6,105.0 749.9,101.8 756.2,98.5 762.5,95.3 768.9,92.0 775.3,88.7 781.7,85.5 788.2,82.2 794.8,79.0 801.3,75.7 807.9,72.4 814.5,69.2 821.2,65.9 827.9,62.7 834.6,59.4 841.3,56.1 848.0,52.9 854.8,49.6 861.5,46.4 868.3,43.1 875.1,39.8 881.9,36.6 888.7,33.3 895.5,30.1 902.3,26.8"/>
<path d="M902.3,613.6 894.6,610.3 887.0,607.1 879.3,603.8 871.7,600.6 864.0,597.3 856.4,594.0 848.8,590.8 841.2,587.5 833.6,584.3 826.1,581.0 818.6,577.7 811.1,574.5 803.6,571.2 796.1,568.0 788.7,564.7 781.3,561.4 774.0,558.2 766.7,554.9 759.4,551.7 752.2,548.4 745.0,545.1 737.9,541.9 730.8,538.6 723.8,535.4 716.8,532.1 709.9,528.8 703.1,525.6 696.3,522.3 689.5,519.1 682.9,515.8 676.3,512.5 669.7,509.3 663.3,506.0 656.9,502.8 650.6,499.5 644.3,496.2 638.2,493.0 632.1,489.7 626.1,486.5 620.2,483.2 614.4,479.9 608.6,476.7 603.0,473.4 597.4,470.2 592.0,466.9 586.6,463.6 581.3,460.4 576.1,457.1 571.1,453.9 566.1,450.6 561.2,447.3 556.5,444.1 551.8,440.8 547.2,437.6 542.8,434.3 538.4,431.0 534.2,427.8 530.1,424.5 526.1,421.3 522.2,418.0 518.4,414.7 514.8,411.5 511.3,408.2 507.8,405.0 504.5,401.7 501.4,398.4 498.3,395.2 495.4,391.9 492.6,388.7 489.9,385.4 487.3,382.1 484.9,378.9 482.6,375.6 480.4,372.4 478.4,369.1 476.5,365.8 474.7,362.6 473.0,359.3 471.5,356.1 470.1,352.8 468.8,349.5 467.7,346.3 466.7,343.0 465.8,339.8 465.1,336.5 464.5,333.2 464.0,330.0 463.7,326.7 463.5,323.5 463.4,320.2 463.5,316.9 463.7,313.7 464.0,310.4 464.5,307.2 465.1,303.9 465.8,300.6 466.7,297.4 467.7,294.1 468.8,290.9 470.1,287.6 471.5,284.3 473.0,281.1 474.7,277.8 476.5,274.6 478.4,271.3 480.4,268.0 482.6,264.8 484.9,261.5 487.3,258.3 489.9,255.0 492.6,251.7 495.4,248.5 498.3,245.2 501.4,242.0 504.5,238.7 507.8,235.4 511.3,232.2 514.8,228.9 518.4,225.7 522.2,222.4 526.1,219.1 530.1,215.9 534.2,212.6 538.4,209.4 542.8,206.1 547.2,202.8 551.8,199.6 556.5,196.3 561.2,193.1 566.1,189.8 571.1,186.5 576.1,183.3 581.3,180.0 586.6,176.8 592.0,173.5 597.4,170.2 603.0,167.0 608.6,163.7 614.4,160.5 620.2,157.2 626.1,153.9 632.1,150.7 638.2,147.4 644.3,144.2 650.6,140.9 656.9,137.6 663.3,134.4 669.7,131.1 676.3,127.9 682.9,124.6 689.5,121.3 696.3,118.1 703.1,114.8 709.9,111.6 716.8,108.3 723.8,105.0 730.8,101.8 737.9,98.5 745.0,95.3 752.2,92.0 759.4,88.7 766.7,85.5 774.0,82.2 781.3,79.0 788.7,75.7 796.1,72.4 803.6,69.2 811.1,65.9 818.6,62.7 826.1,59.4 833.6,56.1 841.2,52.9 848.8,49.6 856.4,46.4 864.0,43.1 871.7,39.8 879.3,36.6 887.0,33.3 894.6,30.1 902.3,26.8"/>
<path d="M902.3,613.6 893.8,610.3 885.3,607.1 876.8,603.8 868.3,600.6 859.8,597.3 851.3,594.0 842.9,590.8 834.4,587.5 826.0,584.3 817.6,581.0 809.3,577.7 800.9,574.5 792.6,571.2 784.3,568.0 776.1,564.7 767.9,561.4 759.7,558.2 751.6,554.9 743.5,551.7 735.5,548.4 727.5,545.1 719.6,541.9 711.8,538.6 704.0,535.4 696.2,532.1 688.5,528.8 680.9,525.6 673.4,522.3 665.9,519.1 658.5,515.8 651.1,512.5 643.9,509.3 636.7,506.0 629.6,502.8 622.6,499.5 615.7,496.2 608.8,493.0 602.1,489.7 595.4,486.5 588.8,483.2 582.4,479.9 576.0,476.7 569.7,473.4 563.5,470.2 557.5,466.9 551.5,463.6 545.7,460.4 539.9,457.1 534.3,453.9 528.7,450.6 523.3,447.3 518.0,444.1 512.8,440.8 507.8,437.6 502.8,434.3 498.0,431.0 493.3,427.8 488.7,424.5 484.3,421.3 480.0,418.0 475.8,414.7 471.7,411.5 467.8,408.2 464.0,405.0 460.3,401.7 456.8,398.4 453.4,395.2 450.2,391.9 447.0,388.7 444.1,385.4 441.2,382.1 438.5,378.9 436.0,375.6 433.5,372.4 431.3,369.1 429.1,365.8 427.1,362.6 425.3,359.3 423.6,356.1 422.1,352.8 420.7,349.5 419.4,346.3 418.3,343.0 417.3,339.8 416.5,336.5 415.8,333.2 415.3,330.0 414.9,326.7 414.7,323.5 414.6,320.2 414.7,316.9 414.9,313.7 415.3,310.4 415.8,307.2 416.5,303.9 417.3,300.6 418.3,297.4 419.4,294.1 420.7,290.9 422.1,287.6 423.6,284.3 425.3,281.1 427.1,277.8 429.1,274.6 431.3,271.3 433.5,268.0 436.0,264.8 438.5,261.5 441.2,258.3 444.1,255.0 447.0,251.7 450.2,248.5 453.4,245.2 456.8,242.0 460.3,238.7 464.0,235.4 467.8,232.2 471.7,228.9 475.8,225.7 480.0,222.4 484.3,219.1 488.7,215.9 493.3,212.6 498.0,209.4 502.8,206.1 507.8,202.8 512.8,199.6 518.0,196.3 523.3,193.1 528.7,189.8 534.3,186.5 539.9,183.3 545.7,180.0 551.5,176.8 557.5,173.5 563.5,170.2 569.7,167.0 576.0,163.7 582.4,160.5 588.8,157.2 595.4,153.9 602.1,150.7 608.8,147.4 615.7,144.2 622.6,140.9 629.6,137.6 636.7,134.4 643.9,131.1 651.1,127.9 658.5,124.6 665.9,121.3 673.4,118.1 680.9,114.8 688.5,111.6 696.2,108.3 704.0,105.0 711.8,101.8 719.6,98.5 727.5,95.3 735.5,92.0 743.5,88.7 751.6,85.5 759.7,82.2 767.9,79.0 776.1,75.7 784.3,72.4 792.6,69.2 800.9,65.9 809.3,62.7 817.6,59.4 826.0,56.1 834.4,52.9 842.9,49.6 851.3,46.4 859.8,43.1 868.3,39.8 876.8,36.6 885.3,33.3 893.8,30.1 902.3,26.8"/>
<path d="M902.3,613.6 892.9,610.3 883.6,607.1 874.2,603.8 864.9,600.6 855.5,597.3 846.2,594.0 836.9,590.8 827.6,587.5 818.4,584.3 809.2,581.0 799.9,577.7 790.8,574.5 781.6,571.2 772.5,568.0 763.5,564.7 754.4,561.4 745.5,558.2 736.5,554.9 727.7,551.7 718.8,548.4 710.1,545.1 701.4,541.9 692.7,538.6 684.1,535.4 675.6,532.1 667.2,528.8 658.8,525.6 650.5,522.3 642.2,519.1 634.1,515.8 626.0,512.5 618.0,509.3 610.1,506.0 602.3,502.8 594.6,499.5 587.0,496.2 579.5,493.0 572.0,489.7 564.7,486.5 557.5,483.2 550.4,479.9 543.4,476.7 536.5,473.4 529.7,470.2 523.0,466.9 516.4,463.6 510.0,460.4 503.7,457.1 497.5,453.9 491.4,450.6 485.4,447.3 479.6,444.1 473.9,440.8 468.3,437.6 462.9,434.3 457.6,431.0 452.4,427.8 447.4,424.5 442.5,421.3 437.8,418.0 433.1,414.7 428.7,411.5 424.4,408.2 420.2,405.0 416.1,401.7 412.3,398.4 408.5,395.2 404.9,391.9 401.5,388.7 398.2,385.4 395.1,382.1 392.1,378.9 389.3,375.6 386.7,372.4 384.2,369.1 381.8,365.8 379.6,362.6 377.6,359.3 375.7,356.1 374.0,352.8 372.5,349.5 371.1,346.3 369.9,343.0 368.8,339.8 367.9,336.5 367.2,333.2 366.6,330.0 366.2,326.7 366.0,323.5 365.9,320.2 366.0,316.9 366.2,313.7 366.6,310.4 367.2,307.2 367.9,303.9 368.8,300.6 369.9,297.4 371.1,294.1 372.5,290.9 374.0,287.6 375.7,284.3 377.6,281.1 379.6,277.8 381.8,274.6 384.2,271.3 386.7,268.0 389.3,264.8 392.1,261.5 395.1,258.3 398.2,255.0 401.5,251.7 404.9,248.5 408.5,245.2 412.3,242.0 416.1,238.7 420.2,235.4 424.4,232.2 428.7,228.9 433.1,225.7 437.8,222.4 442.5,219.1 447.4,215.9 452.4,212.6 457.6,209.4 462.9,206.1 468.3,202.8 473.9,199.6 479.6,196.3 485.4,193.1 491.4,189.8 497.5,186.5 503.7,183.3 510.0,180.0 516.4,176.8 523.0,173.5 529.7,170.2 536.5,167.0 543.4,163.7 550.4,160.5 557.5,157.2 564.7,153.9 572.0,150.7 579.5,147.4 587.0,144.2 594.6,140.9 602.3,137.6 610.1,134.4 618.0,131.1 626.0,127.9 634.1,124.6 642.2,121.3 650.5,118.1 658.8,114.8 667.2,111.6 675.6,108.3 684.1,105.0 692.7,101.8 701.4,98.5 710.1,95.3 718.8,92.0 727.7,88.7 736.5,85.5 745.5,82.2 754.4,79.0 763.5,75.7 772.5,72.4 781.6,69.2 790.8,65.9 799.9,62.7 809.2,59.4 818.4,56.1 827.6,52.9 836.9,49.6 846.2,46.4 855.5,43.1 864.9,39.8 874.2,36.6 883.6,33.3 892.9,30.1 902.3,26.8"/>
<path d="M902.3,613.6 892.1,610.3 881.9,607.1 871.7,603.8 861.5,600.6 851.3,597.3 841.1,594.0 831.0,590.8 820.9,587.5 810.8,584.3 800.7,581.0 790.6,577.7 780.6,574.5 770.7,571.2 760.7,568.0 750.8,564.7 741.0,561.4 731.2,558.2 721.5,554.9 711.8,551.7 702.2,548.4 692.6,545.1 683.1,541.9 673.7,538.6 664.3,535.4 655.0,532.1 645.8,528.8 636.6,525.6 627.6,522.3 618.6,519.1 609.7,515.8 600.9,512.5 592.2,509.3 583.6,506.0 575.1,502.8 566.7,499.5 558.3,496.2 550.1,493.0 542.0,489.7 534.0,486.5 526.2,483.2 518.4,479.9 510.7,476.7 503.2,473.4 495.8,470.2 488.5,466.9 481.4,463.6 474.3,460.4 467.4,457.1 460.7,453.9 454.0,450.6 447.5,447.3 441.2,444.1 435.0,440.8 428.9,437.6 422.9,434.3 417.2,431.0 411.5,427.8 406.0,424.5 400.7,421.3 395.5,418.0 390.5,414.7 385.6,411.5 380.9,408.2 376.3,405.0 371.9,401.7 367.7,398.4 363.6,395.2 359.7,391.9 356.0,388.7 352.4,385.4 349.0,382.1 345.8,378.9 342.7,375.6 339.8,372.4 337.1,369.1 334.5,365.8 332.1,362.6 329.9,359.3 327.9,356.1 326.0,352.8 324.3,349.5 322.8,346.3 321.5,343.0 320.3,339.8 319.3,336.5 318.5,333.2 317.9,330.0 317.5,326.7 317.2,323.5 317.1,320.2 317.2,316.9 317.5,313.7 317.9,310.4 318.5,307.2 319.3,303.9 320.3,300.6 321.5,297.4 322.8,294.1 324.3,290.9 326.0,287.6 327.9,284.3 329.9,281.1 332.1,277.8 334.5,274.6 337.1,271.3 339.8,268.0 342.7,264.8 345.8,261.5 349.0,258.3 352.4,255.0 356.0,251.7 359.7,248.5 363.6,245.2 367.7,242.0 371.9,238.7 376.3,235.4 380.9,232.2 385.6,228.9 390.5,225.7 395.5,222.4 400.7,219.1 406.0,215.9 411.5,212.6 417.2,209.4 422.9,206.1 428.9,202.8 435.0,199.6 441.2,196.3 447.5,193.1 454.0,189.8 460.7,186.5 467.4,183.3 474.3,180.0 481.4,176.8 488.5,173.5 495.8,170.2 503.2,167.0 510.7,163.7 518.4,160.5 526.2,157.2 534.0,153.9 542.0,150.7 550.1,147.4 558.3,144.2 566.7,140.9 575.1,137.6 583.6,134.4 592.2,131.1 600.9,127.9 609.7,124.6 618.6,121.3 627.6,118.1 636.6,114.8 645.8,111.6 655.0,108.3 664.3,105.0 673.7,101.8 683.1,98.5 692.6,95.3 702.2,92.0 711.8,88.7 721.5,85.5 731.2,82.2 741.0,79.0 750.8,75.7 760.7,72.4 770.7,69.2 780.6,65.9 790.6,62.7 800.7,59.4 810.8,56.1 820.9,52.9 831.0,49.6 841.1,46.4 851.3,43.1 861.5,39.8 871.7,36.6 881.9,33.3 892.1,30.1 902.3,26.8"/>
<path d="M750.8,564.7 752.5,564.7 754.2,564.7 755.9,564.7 757.6,564.7 759.3,564.7 760.9,564.7 762.6,564.7 764.3,564.7 766.0,564.7 767.7,564.7 769.4,564.7 771.0,564.7 772.7,564.7 774.4,564.7 776.1,564.7 777.8,564.7 779.5,564.7 781.1,564.7 782.8,564.7 784.5,564.7 786.2,564.7 787.9,564.7 789.5,564.7 791.2,564.7 792.9,564.7 794.6,564.7 796.3,564.7 798.0,564.7 799.6,564.7 801.3,564.7 803.0,564.7 804.7,564.7 806.4,564.7 808.1,564.7 809.7,564.7 811.4,564.7 813.1,564.7 814.8,564.7 816.5,564.7 818.2,564.7 819.8,564.7 821.5,564.7 823.2,564.7 824.9,564.7 826.6,564.7 828.3,564.7 829.9,564.7 831.6,564.7 833.3,564.7 835.0,564.7 836.7,564.7 838.4,564.7 840.0,564.7 841.7,564.7 843.4,564.7 845.1,564.7 846.8,564.7 848.4,564.7 850.1,564.7 851.8,564.7 853.5,564.7 855.2,564.7 856.9,564.7 858.5,564.7 860.2,564.7 861.9,564.7 863.6,564.7 865.3,564.7 867.0,564.7 868.6,564.7 870.3,564.7 872.0,564.7 873.7,564.7 875.4,564.7 877.1,564.7 878.7,564.7 880.4,564.7 882.1,564.7 883.8,564.7 885.5,564.7 887.2,564.7 888.8,564.7 890.5,564.7 892.2,564.7 893.9,564.7 895.6,564.7 897.3,564.7 898.9,564.7 900.6,564.7 902.3,564.7 904.0,564.7 905.7,564.7 907.3,564.7 909.0,564.7 910.7,564.7 912.4,564.7 914.1,564.7 915.8,564.7 917.4,564.7 919.1,564.7 920.8,564.7 922.5,564.7 924.2,564.7 925.9,564.7 927.5,564.7 929.2,564.7 930.9,564.7 932.6,564.7 934.3,564.7 936.0,564.7 937.6,564.7 939.3,564.7 941.0,564.7 942.7,564.7 944.4,564.7 946.1,564.7 947.7,564.7 949.4,564.7 951.1,564.7 952.8,564.7 954.5,564.7 956.2,564.7 957.8,564.7 959.5,564.7 961.2,564.7 962.9,564.7 964.6,564.7 966.2,564.7 967.9,564.7 969.6,564.7 971.3,564.7 973.0,564.7 974.7,564.7 976.3,564.7 978.0,564.7 979.7,564.7 981.4,564.7 983.1,564.7 984.8,564.7 986.4,564.7 988.1,564.7 989.8,564.7 991.5,564.7 993.2,564.7 994.9,564.7 996.5,564.7 998.2,564.7 999.9,564.7 1001.6,564.7 1003.3,564.7 1005.0,564.7 1006.6,564.7 1008.3,564.7 1010.0,564.7 1011.7,564.7 1013.4,564.7 1015.1,564.7 1016.7,564.7 1018.4,564.7 1020.1,564.7 1021.8,564.7 1023.5,564.7 1025.1,564.7 1026.8,564.7 1028.5,564.7 1030.2,564.7 1031.9,564.7 1033.6,564.7 1035.2,564.7 1036.9,564.7 1038.6,564.7 1040.3,564.7 1042.0,564.7 1043.7,564.7 1045.3,564.7 1047.0,564.7 1048.7,564.7 1050.4,564.7 1052.1,564.7 1053.8,564.7"/>
<path d="M609.7,515.8 613.0,515.8 616.2,515.8 619.5,515.8 622.7,515.8 626.0,515.8 629.2,515.8 632.5,515.8 635.7,515.8 639.0,515.8 642.2,515.8 645.5,515.8 648.7,515.8 652.0,515.8 655.2,515.8 658.5,515.8 661.7,515.8 665.0,515.8 668.2,515.8 671.5,515.8 674.7,515.8 678.0,515.8 681.2,515.8 684.5,515.8 687.7,515.8 691.0,515.8 694.2,515.8 697.5,515.8 700.7,515.8 704.0,515.8 707.2,515.8 710.5,515.8 713.7,515.8 717.0,515.8 720.2,515.8 723.5,515.8 726.7,515.8 730.0,515.8 733.2,515.8 736.5,515.8 739.8,515.8 743.0,515.8 746.3,515.8 749.5,515.8 752.8,515.8 756.0,515.8 759.3,515.8 762.5,515.8 765.8,515.8 769.0,515.8 772.3,515.8 775.5,515.8 778.8,515.8 782.0,515.8 785.3,515.8 788.5,515.8 791.8,515.8 795.0,515.8 798.3,515.8 801.5,515.8 804.8,515.8 808.0,515.8 811.3,515.8 814.5,515.8 817.8,515.8 821.0,515.8 824.3,515.8 827.5,515.8 830.8,515.8 834.0,515.8 837.3,515.8 840.5,515.8 843.8,515.8 847.0,515.8 850.3,515.8 853.5,515.8 856.8,515.8 860.0,515.8 863.3,515.8 866.5,515.8 869.8,515.8 873.0,515.8 876.3,515.8 879.5,515.8 882.8,515.8 886.0,515.8 889.3,515.8 892.5,515.8 895.8,515.8 899.0,515.8 902.3,515.8 905.6,515.8 908.8,515.8 912.1,515.8 915.3,515.8 918.6,515.8 921.8,515.8 925.1,515.8 928.3,515.8 931.6,515.8 934.8,515.8 938.1,515.8 941.3,515.8 944.6,515.8 947.8,515.8 951.1,515.8 954.3,515.8 957.6,515.8 960.8,515.8 964.1,515.8 967.3,515.8 970.6,515.8 973.8,515.8 977.1,515.8 980.3,515.8 983.6,515.8 986.8,515.8 990.1,515.8 993.3,515.8 996.6,515.8 999.8,515.8 1003.1,515.8 1006.3,515.8 1009.6,515.8 1012.8,515.8 1016.1,515.8 1019.3,515.8 1022.6,515.8 1025.8,515.8 1029.1,515.8 1032.3,515.8 1035.6,515.8 1038.8,515.8 1042.1,515.8 1045.3,515.8 1048.6,515.8 1051.8,515.8 1055.1,515.8 1058.3,515.8 1061.6,515.8 1064.8,515.8 1068.1,515.8 1071.4,515.8 1074.6,515.8 1077.9,515.8 1081.1,515.8 1084.4,515.8 1087.6,515.8 1090.9,515.8 1094.1,515.8 1097.4,515.8 1100.6,515.8 1103.9,515.8 1107.1,515.8 1110.4,515.8 1113.6,515.8 1116.9,515.8 1120.1,515.8 1123.4,515.8 1126.6,515.8 1129.9,515.8 1133.1,515.8 1136.4,515.8 1139.6,515.8 1142.9,515.8 1146.1,515.8 1149.4,515.8 1152.6,515.8 1155.9,515.8 1159.1,515.8 1162.4,515.8 1165.6,515.8 1168.9,515.8 1172.1,515.8 1175.4,515.8 1178.6,515.8 1181.9,515.8 1185.1,515.8 1188.4,515.8 1191.6,515.8 1194.9,515.8"/>
<path d="M488.5,466.9 493.1,466.9 497.7,466.9 502.3,466.9 506.9,466.9 511.5,466.9 516.1,466.9 520.7,466.9 525.3,466.9 529.9,466.9 534.5,466.9 539.1,466.9 543.7,466.9 548.3,466.9 552.9,466.9 557.5,466.9 562.1,466.9 566.7,466.9 571.3,466.9 575.9,466.9 580.5,466.9 585.1,466.9 589.7,466.9 594.3,466.9 598.9,466.9 603.5,466.9 608.1,466.9 612.7,466.9 617.2,466.9 621.8,466.9 626.4,466.9 631.0,466.9 635.6,466.9 640.2,466.9 644.8,466.9 649.4,466.9 654.0,466.9 658.6,466.9 663.2,466.9 667.8,466.9 672.4,466.9 677.0,466.9 681.6,466.9 686.2,466.9 690.8,466.9 695.4,466.9 700.0,466.9 704.6,466.9 709.2,466.9 713.8,466.9 718.4,466.9 723.0,466.9 727.6,466.9 732.2,466.9 736.8,466.9 741.4,466.9 746.0,466.9 750.6,466.9 755.2,466.9 759.8,466.9 764.4,466.9 769.0,466.9 773.6,466.9 778.2,466.9 782.8,466.9 787.4,466.9 792.0,466.9 796.6,466.9 801.2,466.9 805.8,466.9 810.3,466.9 814.9,466.9 819.5,466.9 824.1,466.9 828.7,466.9 833.3,466.9 837.9,466.9 842.5,466.9 847.1,466.9 851.7,466.9 856.3,466.9 860.9,466.9 865.5,466.9 870.1,466.9 874.7,466.9 879.3,466.9 883.9,466.9 888.5,466.9 893.1,466.9 897.7,466.9 902.3,466.9 906.9,466.9 911.5,466.9 916.1,466.9 920.7,466.9 925.3,466.9 929.9,466.9 934.5,466.9 939.1,466.9 943.7,466.9 948.3,466.9 952.9,466.9 957.5,466.9 962.1,466.9 966.7,466.9 971.3,466.9 975.9,466.9 980.5,466.9 985.1,466.9 989.7,466.9 994.3,466.9 998.8,466.9 1003.4,466.9 1008.0,466.9 1012.6,466.9 1017.2,466.9 1021.8,466.9 1026.4,466.9 1031.0,466.9 1035.6,466.9 1040.2,466.9 1044.8,466.9 1049.4,466.9 1054.0,466.9 1058.6,466.9 1063.2,466.9 1067.8,466.9 1072.4,466.9 1077.0,466.9 1081.6,466.9 1086.2,466.9 1090.8,466.9 1095.4,466.9 1100.0,466.9 1104.6,466.9 1109.2,466.9 1113.8,466.9 1118.4,466.9 1123.0,466.9 1127.6,466.9 1132.2,466.9 1136.8,466.9 1141.4,466.9 1146.0,466.9 1150.6,466.9 1155.2,466.9 1159.8,466.9 1164.4,466.9 1169.0,466.9 1173.6,466.9 1178.2,466.9 1182.8,466.9 1187.4,466.9 1191.9,466.9 1196.5,466.9 1201.1,466.9 1205.7,466.9 1210.3,466.9 1214.9,466.9 1219.5,466.9 1224.1,466.9 1228.7,466.9 1233.3,466.9 1237.9,466.9 1242.5,466.9 1247.1,466.9 1251.7,466.9 1256.3,466.9 1260.9,466.9 1265.5,466.9 1270.1,466.9 1274.7,466.9 1279.3,466.9 1283.9,466.9 1288.5,466.9 1293.1,466.9 1297.7,466.9 1302.3,466.9 1306.9,466.9 1311.5,466.9 1316.1,466.9"/>
<path d="M395.5,418.0 401.2,418.0 406.8,418.0 412.4,418.0 418.0,418.0 423.7,418.0 429.3,418.0 434.9,418.0 440.6,418.0 446.2,418.0 451.8,418.0 457.5,418.0 463.1,418.0 468.7,418.0 474.4,418.0 480.0,418.0 485.6,418.0 491.2,418.0 496.9,418.0 502.5,418.0 508.1,418.0 513.8,418.0 519.4,418.0 525.0,418.0 530.7,418.0 536.3,418.0 541.9,418.0 547.6,418.0 553.2,418.0 558.8,418.0 564.4,418.0 570.1,418.0 575.7,418.0 581.3,418.0 587.0,418.0 592.6,418.0 598.2,418.0 603.9,418.0 609.5,418.0 615.1,418.0 620.8,418.0 626.4,418.0 632.0,418.0 637.6,418.0 643.3,418.0 648.9,418.0 654.5,418.0 660.2,418.0 665.8,418.0 671.4,418.0 677.1,418.0 682.7,418.0 688.3,418.0 694.0,418.0 699.6,418.0 705.2,418.0 710.8,418.0 716.5,418.0 722.1,418.0 727.7,418.0 733.4,418.0 739.0,418.0 744.6,418.0 750.3,418.0 755.9,418.0 761.5,418.0 767.2,418.0 772.8,418.0 778.4,418.0 784.1,418.0 789.7,418.0 795.3,418.0 800.9,418.0 806.6,418.0 812.2,418.0 817.8,418.0 823.5,418.0 829.1,418.0 834.7,418.0 840.4,418.0 846.0,418.0 851.6,418.0 857.3,418.0 862.9,418.0 868.5,418.0 874.1,418.0 879.8,418.0 885.4,418.0 891.0,418.0 896.7,418.0 902.3,418.0 907.9,418.0 913.6,418.0 919.2,418.0 924.8,418.0 930.5,418.0 936.1,418.0 941.7,418.0 947.3,418.0 953.0,418.0 958.6,418.0 964.2,418.0 969.9,418.0 975.5,418.0 981.1,418.0 986.8,418.0 992.4,418.0 998.0,418.0 1003.7,418.0 1009.3,418.0 1014.9,418.0 1020.5,418.0 1026.2,418.0 1031.8,418.0 1037.4,418.0 1043.1,418.0 1048.7,418.0 1054.3,418.0 1060.0,418.0 1065.6,418.0 1071.2,418.0 1076.9,418.0 1082.5,418.0 1088.1,418.0 1093.8,418.0 1099.4,418.0 1105.0,418.0 1110.6,418.0 1116.3,418.0 1121.9,418.0 1127.5,418.0 1133.2,418.0 1138.8,418.0 1144.4,418.0 1150.1,418.0 1155.7,418.0 1161.3,418.0 1167.0,418.0 1172.6,418.0 1178.2,418.0 1183.8,418.0 1189.5,418.0 1195.1,418.0 1200.7,418.0 1206.4,418.0 1212.0,418.0 1217.6,418.0 1223.3,418.0 1228.9,418.0 1234.5,418.0 1240.2,418.0 1245.8,418.0 1251.4,418.0 1257.0,418.0 1262.7,418.0 1268.3,418.0 1273.9,418.0 1279.6,418.0 1285.2,418.0 1290.8,418.0 1296.5,418.0 1302.1,418.0 1307.7,418.0 1313.4,418.0 1319.0,418.0 1324.6,418.0 1330.2,418.0 1335.9,418.0 1341.5,418.0 1347.1,418.0 1352.8,418.0 1358.4,418.0 1364.0,418.0 1369.7,418.0 1375.3,418.0 1380.9,418.0 1386.6,418.0 1392.2,418.0 1397.8,418.0 1403.4,418.0 1409.1,418.0"/>
<path d="M337.1,369.1 343.3,369.1 349.6,369.1 355.9,369.1 362.2,369.1 368.5,369.1 374.7,369.1 381.0,369.1 387.3,369.1 393.6,369.1 399.9,369.1 406.1,369.1 412.4,369.1 418.7,369.1 425.0,369.1 431.3,369.1 437.5,369.1 443.8,369.1 450.1,369.1 456.4,369.1 462.7,369.1 468.9,369.1 475.2,369.1 481.5,369.1 487.8,369.1 494.1,369.1 500.4,369.1 506.6,369.1 512.9,369.1 519.2,369.1 525.5,369.1 531.8,369.1 538.0,369.1 544.3,369.1 550.6,369.1 556.9,369.1 563.2,369.1 569.4,369.1 575.7,369.1 582.0,369.1 588.3,369.1 594.6,369.1 600.8,369.1 607.1,369.1 613.4,369.1 619.7,369.1 626.0,369.1 632.2,369.1 638.5,369.1 644.8,369.1 651.1,369.1 657.4,369.1 663.6,369.1 669.9,369.1 676.2,369.1 682.5,369.1 688.8,369.1 695.0,369.1 701.3,369.1 707.6,369.1 713.9,369.1 720.2,369.1 726.4,369.1 732.7,369.1 739.0,369.1 745.3,369.1 751.6,369.1 757.8,369.1 764.1,369.1 770.4,369.1 776.7,369.1 783.0,369.1 789.3,369.1 795.5,369.1 801.8,369.1 808.1,369.1 814.4,369.1 820.7,369.1 826.9,369.1 833.2,369.1 839.5,369.1 845.8,369.1 852.1,369.1 858.3,369.1 864.6,369.1 870.9,369.1 877.2,369.1 883.5,369.1 889.7,369.1 896.0,369.1 902.3,369.1 908.6,369.1 914.9,369.1 921.1,369.1 927.4,369.1 933.7,369.1 940.0,369.1 946.3,369.1 952.5,369.1 958.8,369.1 965.1,369.1 971.4,369.1 977.7,369.1 983.9,369.1 990.2,369.1 996.5,369.1 1002.8,369.1 1009.1,369.1 1015.3,369.1 1021.6,369.1 1027.9,369.1 1034.2,369.1 1040.5,369.1 1046.8,369.1 1053.0,369.1 1059.3,369.1 1065.6,369.1 1071.9,369.1 1078.2,369.1 1084.4,369.1 1090.7,369.1 1097.0,369.1 1103.3,369.1 1109.6,369.1 1115.8,369.1 1122.1,369.1 1128.4,369.1 1134.7,369.1 1141.0,369.1 1147.2,369.1 1153.5,369.1 1159.8,369.1 1166.1,369.1 1172.4,369.1 1178.6,369.1 1184.9,369.1 1191.2,369.1 1197.5,369.1 1203.8,369.1 1210.0,369.1 1216.3,369.1 1222.6,369.1 1228.9,369.1 1235.2,369.1 1241.4,369.1 1247.7,369.1 1254.0,369.1 1260.3,369.1 1266.6,369.1 1272.8,369.1 1279.1,369.1 1285.4,369.1 1291.7,369.1 1298.0,369.1 1304.2,369.1 1310.5,369.1 1316.8,369.1 1323.1,369.1 1329.4,369.1 1335.7,369.1 1341.9,369.1 1348.2,369.1 1354.5,369.1 1360.8,369.1 1367.1,369.1 1373.3,369.1 1379.6,369.1 1385.9,369.1 1392.2,369.1 1398.5,369.1 1404.7,369.1 1411.0,369.1 1417.3,369.1 1423.6,369.1 1429.9,369.1 1436.1,369.1 1442.4,369.1 1448.7,369.1 1455.0,369.1 1461.3,369.1 1467.5,369.1"/>
<path d="M317.1,320.2 323.6,320.2 330.1,320.2 336.6,320.2 343.1,320.2 349.6,320.2 356.1,320.2 362.6,320.2 369.1,320.2 375.6,320.2 382.1,320.2 388.6,320.2 395.1,320.2 401.6,320.2 408.1,320.2 414.6,320.2 421.2,320.2 427.7,320.2 434.2,320.2 440.7,320.2 447.2,320.2 453.7,320.2 460.2,320.2 466.7,320.2 473.2,320.2 479.7,320.2 486.2,320.2 492.7,320.2 499.2,320.2 505.7,320.2 512.2,320.2 518.7,320.2 525.2,320.2 531.7,320.2 538.2,320.2 544.7,320.2 551.2,320.2 557.7,320.2 564.2,320.2 570.7,320.2 577.2,320.2 583.7,320.2 590.2,320.2 596.7,320.2 603.2,320.2 609.7,320.2 616.2,320.2 622.7,320.2 629.2,320.2 635.7,320.2 642.2,320.2 648.7,320.2 655.2,320.2 661.7,320.2 668.2,320.2 674.7,320.2 681.2,320.2 687.7,320.2 694.2,320.2 700.7,320.2 707.2,320.2 713.7,320.2 720.2,320.2 726.7,320.2 733.2,320.2 739.8,320.2 746.3,320.2 752.8,320.2 759.3,320.2 765.8,320.2 772.3,320.2 778.8,320.2 785.3,320.2 791.8,320.2 798.3,320.2 804.8,320.2 811.3,320.2 817.8,320.2 824.3,320.2 830.8,320.2 837.3,320.2 843.8,320.2 850.3,320.2 856.8,320.2 863.3,320.2 869.8,320.2 876.3,320.2 882.8,320.2 889.3,320.2 895.8,320.2 902.3,320.2 908.8,320.2 915.3,320.2 921.8,320.2 928.3,320.2 934.8,320.2 941.3,320.2 947.8,320.2 954.3,320.2 960.8,320.2 967.3,320.2 973.8,320.2 980.3,320.2 986.8,320.2 993.3,320.2 999.8,320.2 1006.3,320.2 1012.8,320.2 1019.3,320.2 1025.8,320.2 1032.3,320.2 1038.8,320.2 1045.3,320.2 1051.8,320.2 1058.3,320.2 1064.8,320.2 1071.4,320.2 1077.9,320.2 1084.4,320.2 1090.9,320.2 1097.4,320.2 1103.9,320.2 1110.4,320.2 1116.9,320.2 1123.4,320.2 1129.9,320.2 1136.4,320.2 1142.9,320.2 1149.4,320.2 1155.9,320.2 1162.4,320.2 1168.9,320.2 1175.4,320.2 1181.9,320.2 1188.4,320.2 1194.9,320.2 1201.4,320.2 1207.9,320.2 1214.4,320.2 1220.9,320.2 1227.4,320.2 1233.9,320.2 1240.4,320.2 1246.9,320.2 1253.4,320.2 1259.9,320.2 1266.4,320.2 1272.9,320.2 1279.4,320.2 1285.9,320.2 1292.4,320.2 1298.9,320.2 1305.4,320.2 1311.9,320.2 1318.4,320.2 1324.9,320.2 1331.4,320.2 1337.9,320.2 1344.4,320.2 1350.9,320.2 1357.4,320.2 1363.9,320.2 1370.4,320.2 1376.9,320.2 1383.4,320.2 1389.9,320.2 1396.5,320.2 1403.0,320.2 1409.5,320.2 1416.0,320.2 1422.5,320.2 1429.0,320.2 1435.5,320.2 1442.0,320.2 1448.5,320.2 1455.0,320.2 1461.5,320.2 1468.0,320.2 1474.5,320.2 1481.0,320.2 1487.5,320.2"/>
<path d="M337.1,271.3 343.3,271.3 349.6,271.3 355.9,271.3 362.2,271.3 368.5,271.3 374.7,271.3 381.0,271.3 387.3,271.3 393.6,271.3 399.9,271.3 406.1,271.3 412.4,271.3 418.7,271.3 425.0,271.3 431.3,271.3 437.5,271.3 443.8,271.3 450.1,271.3 456.4,271.3 462.7,271.3 468.9,271.3 475.2,271.3 481.5,271.3 487.8,271.3 494.1,271.3 500.4,271.3 506.6,271.3 512.9,271.3 519.2,271.3 525.5,271.3 531.8,271.3 538.0,271.3 544.3,271.3 550.6,271.3 556.9,271.3 563.2,271.3 569.4,271.3 575.7,271.3 582.0,271.3 588.3,271.3 594.6,271.3 600.8,271.3 607.1,271.3 613.4,271.3 619.7,271.3 626.0,271.3 632.2,271.3 638.5,271.3 644.8,271.3 651.1,271.3 657.4,271.3 663.6,271.3 669.9,271.3 676.2,271.3 682.5,271.3 688.8,271.3 695.0,271.3 701.3,271.3 707.6,271.3 713.9,271.3 720.2,271.3 726.4,271.3 732.7,271.3 739.0,271.3 745.3,271.3 751.6,271.3 757.8,271.3 764.1,271.3 770.4,271.3 776.7,271.3 783.0,271.3 789.3,271.3 795.5,271.3 801.8,271.3 808.1,271.3 814.4,271.3 820.7,271.3 826.9,271.3 833.2,271.3 839.5,271.3 845.8,271.3 852.1,271.3 858.3,271.3 864.6,271.3 870.9,271.3 877.2,271.3 883.5,271.3 889.7,271.3 896.0,271.3 902.3,271.3 908.6,271.3 914.9,271.3 921.1,271.3 927.4,271.3 933.7,271.3 940.0,271.3 946.3,271.3 952.5,271.3 958.8,271.3 965.1,271.3 971.4,271.3 977.7,271.3 983.9,271.3 990.2,271.3 996.5,271.3 1002.8,271.3 1009.1,271.3 1015.3,271.3 1021.6,271.3 1027.9,271.3 1034.2,271.3 1040.5,271.3 1046.8,271.3 1053.0,271.3 1059.3,271.3 1065.6,271.3 1071.9,271.3 1078.2,271.3 1084.4,271.3 1090.7,271.3 1097.0,271.3 1103.3,271.3 1109.6,271.3 1115.8,271.3 1122.1,271.3 1128.4,271.3 1134.7,271.3 1141.0,271.3 1147.2,271.3 1153.5,271.3 1159.8,271.3 1166.1,271.3 1172.4,271.3 1178.6,271.3 1184.9,271.3 1191.2,271.3 1197.5,271.3 1203.8,271.3 1210.0,271.3 1216.3,271.3 1222.6,271.3 1228.9,271.3 1235.2,271.3 1241.4,271.3 1247.7,271.3 1254.0,271.3 1260.3,271.3 1266.6,271.3 1272.8,271.3 1279.1,271.3 1285.4,271.3 1291.7,271.3 1298.0,271.3 1304.2,271.3 1310.5,271.3 1316.8,271.3 1323.1,271.3 1329.4,271.3 1335.7,271.3 1341.9,271.3 1348.2,271.3 1354.5,271.3 1360.8,271.3 1367.1,271.3 1373.3,271.3 1379.6,271.3 1385.9,271.3 1392.2,271.3 1398.5,271.3 1404.7,271.3 1411.0,271.3 1417.3,271.3 1423.6,271.3 1429.9,271.3 1436.1,271.3 1442.4,271.3 1448.7,271.3 1455.0,271.3 1461.3,271.3 1467.5,271.3"/>
<path d="M395.5,222.4 401.2,222.4 406.8,222.4 412.4,222.4 418.0,222.4 423.7,222.4 429.3,222.4 434.9,222.4 440.6,222.4 446.2,222.4 451.8,222.4 457.5,222.4 463.1,222.4 468.7,222.4 474.4,222.4 480.0,222.4 485.6,222.4 491.2,222.4 496.9,222.4 502.5,222.4 508.1,222.4 513.8,222.4 519.4,222.4 525.0,222.4 530.7,222.4 536.3,222.4 541.9,222.4 547.6,222.4 553.2,222.4 558.8,222.4 564.4,222.4 570.1,222.4 575.7,222.4 581.3,222.4 587.0,222.4 592.6,222.4 598.2,222.4 603.9,222.4 609.5,222.4 615.1,222.4 620.8,222.4 626.4,222.4 632.0,222.4 637.6,222.4 643.3,222.4 648.9,222.4 654.5,222.4 660.2,222.4 665.8,222.4 671.4,222.4 677.1,222.4 682.7,222.4 688.3,222.4 694.0,222.4 699.6,222.4 705.2,222.4 710.8,222.4 716.5,222.4 722.1,222.4 727.7,222.4 733.4,222.4 739.0,222.4 744.6,222.4 750.3,222.4 755.9,222.4 761.5,222.4 767.2,222.4 772.8,222.4 778.4,222.4 784.1,222.4 789.7,222.4 795.3,222.4 800.9,222.4 806.6,222.4 812.2,222.4 817.8,222.4 823.5,222.4 829.1,222.4 834.7,222.4 840.4,222.4 846.0,222.4 851.6,222.4 857.3,222.4 862.9,222.4 868.5,222.4 874.1,222.4 879.8,222.4 885.4,222.4 891.0,222.4 896.7,222.4 902.3,222.4 907.9,222.4 913.6,222.4 919.2,222.4 924.8,222.4 930.5,222.4 936.1,222.4 941.7,222.4 947.3,222.4 953.0,222.4 958.6,222.4 964.2,222.4 969.9,222.4 975.5,222.4 981.1,222.4 986.8,222.4 992.4,222.4 998.0,222.4 1003.7,222.4 1009.3,222.4 1014.9,222.4 1020.5,222.4 1026.2,222.4 1031.8,222.4 1037.4,222.4 1043.1,222.4 1048.7,222.4 1054.3,222.4 1060.0,222.4 1065.6,222.4 1071.2,222.4 1076.9,222.4 1082.5,222.4 1088.1,222.4 1093.8,222.4 1099.4,222.4 1105.0,222.4 1110.6,222.4 1116.3,222.4 1121.9,222.4 1127.5,222.4 1133.2,222.4 1138.8,222.4 1144.4,222.4 1150.1,222.4 1155.7,222.4 1161.3,222.4 1167.0,222.4 1172.6,222.4 1178.2,222.4 1183.8,222.4 1189.5,222.4 1195.1,222.4 1200.7,222.4 1206.4,222.4 1212.0,222.4 1217.6,222.4 1223.3,222.4 1228.9,222.4 1234.5,222.4 1240.2,222.4 1245.8,222.4 1251.4,222.4 1257.0,222.4 1262.7,222.4 1268.3,222.4 1273.9,222.4 1279.6,222.4 1285.2,222.4 1290.8,222.4 1296.5,222.4 1302.1,222.4 1307.7,222.4 1313.4,222.4 1319.0,222.4 1324.6,222.4 1330.2,222.4 1335.9,222.4 1341.5,222.4 1347.1,222.4 1352.8,222.4 1358.4,222.4 1364.0,222.4 1369.7,222.4 1375.3,222.4 1380.9,222.4 1386.6,222.4 1392.2,222.4 1397.8,222.4 1403.4,222.4 1409.1,222.4"/>
<path d="M488.5,173.5 493.1,173.5 497.7,173.5 502.3,173.5 506.9,173.5 511.5,173.5 516.1,173.5 520.7,173.5 525.3,173.5 529.9,173.5 534.5,173.5 539.1,173.5 543.7,173.5 548.3,173.5 552.9,173.5 557.5,173.5 562.1,173.5 566.7,173.5 571.3,173.5 575.9,173.5 580.5,173.5 585.1,173.5 589.7,173.5 594.3,173.5 598.9,173.5 603.5,173.5 608.1,173.5 612.7,173.5 617.2,173.5 621.8,173.5 626.4,173.5 631.0,173.5 635.6,173.5 640.2,173.5 644.8,173.5 649.4,173.5 654.0,173.5 658.6,173.5 663.2,173.5 667.8,173.5 672.4,173.5 677.0,173.5 681.6,173.5 686.2,173.5 690.8,173.5 695.4,173.5 700.0,173.5 704.6,173.5 709.2,173.5 713.8,173.5 718.4,173.5 723.0,173.5 727.6,173.5 732.2,173.5 736.8,173.5 741.4,173.5 746.0,173.5 750.6,173.5 755.2,173.5 759.8,173.5 764.4,173.5 769.0,173.5 773.6,173.5 778.2,173.5 782.8,173.5 787.4,173.5 792.0,173.5 796.6,173.5 801.2,173.5 805.8,173.5 810.3,173.5 814.9,173.5 819.5,173.5 824.1,173.5 828.7,173.5 833.3,173.5 837.9,173.5 842.5,173.5 847.1,173.5 851.7,173.5 856.3,173.5 860.9,173.5 865.5,173.5 870.1,173.5 874.7,173.5 879.3,173.5 883.9,173.5 888.5,173.5 893.1,173.5 897.7,173.5 902.3,173.5 906.9,173.5 911.5,173.5 916.1,173.5 920.7,173.5 925.3,173.5 929.9,173.5 934.5,173.5 939.1,173.5 943.7,173.5 948.3,173.5 952.9,173.5 957.5,173.5 962.1,173.5 966.7,173.5 971.3,173.5 975.9,173.5 980.5,173.5 985.1,173.5 989.7,173.5 994.3,173.5 998.8,173.5 1003.4,173.5 1008.0,173.5 1012.6,173.5 1017.2,173.5 1021.8,173.5 1026.4,173.5 1031.0,173.5 1035.6,173.5 1040.2,173.5 1044.8,173.5 1049.4,173.5 1054.0,173.5 1058.6,173.5 1063.2,173.5 1067.8,173.5 1072.4,173.5 1077.0,173.5 1081.6,173.5 1086.2,173.5 1090.8,173.5 1095.4,173.5 1100.0,173.5 1104.6,173.5 1109.2,173.5 1113.8,173.5 1118.4,173.5 1123.0,173.5 1127.6,173.5 1132.2,173.5 1136.8,173.5 1141.4,173.5 1146.0,173.5 1150.6,173.5 1155.2,173.5 1159.8,173.5 1164.4,173.5 1169.0,173.5 1173.6,173.5 1178.2,173.5 1182.8,173.5 1187.4,173.5 1191.9,173.5 1196.5,173.5 1201.1,173.5 1205.7,173.5 1210.3,173.5 1214.9,173.5 1219.5,173.5 1224.1,173.5 1228.7,173.5 1233.3,173.5 1237.9,173.5 1242.5,173.5 1247.1,173.5 1251.7,173.5 1256.3,173.5 1260.9,173.5 1265.5,173.5 1270.1,173.5 1274.7,173.5 1279.3,173.5 1283.9,173.5 1288.5,173.5 1293.1,173.5 1297.7,173.5 1302.3,173.5 1306.9,173.5 1311.5,173.5 1316.1,173.5"/>
<path d="M609.7,124.6 613.0,124.6 616.2,124.6 619.5,124.6 622.7,124.6 626.0,124.6 629.2,124.6 632.5,124.6 635.7,124.6 639.0,124.6 642.2,124.6 645.5,124.6 648.7,124.6 652.0,124.6 655.2,124.6 658.5,124.6 661.7,124.6 665.0,124.6 668.2,124.6 671.5,124.6 674.7,124.6 678.0,124.6 681.2,124.6 684.5,124.6 687.7,124.6 691.0,124.6 694.2,124.6 697.5,124.6 700.7,124.6 704.0,124.6 707.2,124.6 710.5,124.6 713.7,124.6 717.0,124.6 720.2,124.6 723.5,124.6 726.7,124.6 730.0,124.6 733.2,124.6 736.5,124.6 739.8,124.6 743.0,124.6 746.3,124.6 749.5,124.6 752.8,124.6 756.0,124.6 759.3,124.6 762.5,124.6 765.8,124.6 769.0,124.6 772.3,124.6 775.5,124.6 778.8,124.6 782.0,124.6 785.3,124.6 788.5,124.6 791.8,124.6 795.0,124.6 798.3,124.6 801.5,124.6 804.8,124.6 808.0,124.6 811.3,124.6 814.5,124.6 817.8,124.6 821.0,124.6 824.3,124.6 827.5,124.6 830.8,124.6 834.0,124.6 837.3,124.6 840.5,124.6 843.8,124.6 847.0,124.6 850.3,124.6 853.5,124.6 856.8,124.6 860.0,124.6 863.3,124.6 866.5,124.6 869.8,124.6 873.0,124.6 876.3,124.6 879.5,124.6 882.8,124.6 886.0,124.6 889.3,124.6 892.5,124.6 895.8,124.6 899.0,124.6 902.3,124.6 905.6,124.6 908.8,124.6 912.1,124.6 915.3,124.6 918.6,124.6 921.8,124.6 925.1,124.6 928.3,124.6 931.6,124.6 934.8,124.6 938.1,124.6 941.3,124.6 944.6,124.6 947.8,124.6 951.1,124.6 954.3,124.6 957.6,124.6 960.8,124.6 964.1,124.6 967.3,124.6 970.6,124.6 973.8,124.6 977.1,124.6 980.3,124.6 983.6,124.6 986.8,124.6 990.1,124.6 993.3,124.6 996.6,124.6 999.8,124.6 1003.1,124.6 1006.3,124.6 1009.6,124.6 1012.8,124.6 1016.1,124.6 1019.3,124.6 1022.6,124.6 1025.8,124.6 1029.1,124.6 1032.3,124.6 1035.6,124.6 1038.8,124.6 1042.1,124.6 1045.3,124.6 1048.6,124.6 1051.8,124.6 1055.1,124.6 1058.3,124.6 1061.6,124.6 1064.8,124.6 1068.1,124.6 1071.4,124.6 1074.6,124.6 1077.9,124.6 1081.1,124.6 1084.4,124.6 1087.6,124.6 1090.9,124.6 1094.1,124.6 1097.4,124.6 1100.6,124.6 1103.9,124.6 1107.1,124.6 1110.4,124.6 1113.6,124.6 1116.9,124.6 1120.1,124.6 1123.4,124.6 1126.6,124.6 1129.9,124.6 1133.1,124.6 1136.4,124.6 1139.6,124.6 1142.9,124.6 1146.1,124.6 1149.4,124.6 1152.6,124.6 1155.9,124.6 1159.1,124.6 1162.4,124.6 1165.6,124.6 1168.9,124.6 1172.1,124.6 1175.4,124.6 1178.6,124.6 1181.9,124.6 1185.1,124.6 1188.4,124.6 1191.6,124.6 1194.9,124.6"/>
<path d="M750.8,75.7 752.5,75.7 754.2,75.7 755.9,75.7 757.6,75.7 759.3,75.7 760.9,75.7 762.6,75.7 764.3,75.7 766.0,75.7 767.7,75.7 769.4,75.7 771.0,75.7 772.7,75.7 774.4,75.7 776.1,75.7 777.8,75.7 779.5,75.7 781.1,75.7 782.8,75.7 784.5,75.7 786.2,75.7 787.9,75.7 789.5,75.7 791.2,75.7 792.9,75.7 794.6,75.7 796.3,75.7 798.0,75.7 799.6,75.7 801.3,75.7 803.0,75.7 804.7,75.7 806.4,75.7 808.1,75.7 809.7,75.7 811.4,75.7 813.1,75.7 814.8,75.7 816.5,75.7 818.2,75.7 819.8,75.7 821.5,75.7 823.2,75.7 824.9,75.7 826.6,75.7 828.3,75.7 829.9,75.7 831.6,75.7 833.3,75.7 835.0,75.7 836.7,75.7 838.4,75.7 840.0,75.7 841.7,75.7 843.4,75.7 845.1,75.7 846.8,75.7 848.4,75.7 850.1,75.7 851.8,75.7 853.5,75.7 855.2,75.7 856.9,75.7 858.5,75.7 860.2,75.7 861.9,75.7 863.6,75.7 865.3,75.7 867.0,75.7 868.6,75.7 870.3,75.7 872.0,75.7 873.7,75.7 875.4,75.7 877.1,75.7 878.7,75.7 880.4,75.7 882.1,75.7 883.8,75.7 885.5,75.7 887.2,75.7 888.8,75.7 890.5,75.7 892.2,75.7 893.9,75.7 895.6,75.7 897.3,75.7 898.9,75.7 900.6,75.7 902.3,75.7 904.0,75.7 905.7,75.7 907.3,75.7 909.0,75.7 910.7,75.7 912.4,75.7 914.1,75.7 915.8,75.7 917.4,75.7 919.1,75.7 920.8,75.7 922.5,75.7 924.2,75.7 925.9,75.7 927.5,75.7 929.2,75.7 930.9,75.7 932.6,75.7 934.3,75.7 936.0,75.7 937.6,75.7 939.3,75.7 941.0,75.7 942.7,75.7 944.4,75.7 946.1,75.7 947.7,75.7 949.4,75.7 951.1,75.7 952.8,75.7 954.5,75.7 956.2,75.7 957.8,75.7 959.5,75.7 961.2,75.7 962.9,75.7 964.6,75.7 966.2,75.7 967.9,75.7 969.6,75.7 971.3,75.7 973.0,75.7 974.7,75.7 976.3,75.7 978.0,75.7 979.7,75.7 981.4,75.7 983.1,75.7 984.8,75.7 986.4,75.7 988.1,75.7 989.8,75.7 991.5,75.7 993.2,75.7 994.9,75.7 996.5,75.7 998.2,75.7 999.9,75.7 1001.6,75.7 1003.3,75.7 1005.0,75.7 1006.6,75.7 1008.3,75.7 1010.0,75.7 1011.7,75.7 1013.4,75.7 1015.1,75.7 1016.7,75.7 1018.4,75.7 1020.1,75.7 1021.8,75.7 1023.5,75.7 1025.1,75.7 1026.8,75.7 1028.5,75.7 1030.2,75.7 1031.9,75.7 1033.6,75.7 1035.2,75.7 1036.9,75.7 1038.6,75.7 1040.3,75.7 1042.0,75.7 1043.7,75.7 1045.3,75.7 1047.0,75.7 1048.7,75.7 1050.4,75.7 1052.1,75.7 1053.8,75.7"/>
</g>
<text x="1484.08" y="329.70" font-family="&quot;Liberation Sans&quot;, sans-serif" font-size="10.30" fill="#888888" text-anchor="middle" textLength="26.70" lengthAdjust="spacingAndGlyphs">+180</text>
<circle cx="1501.3" cy="322.4" r="0.9" fill="none" stroke="#888888" stroke-width="0.6"/>
<text x="1386.55" y="329.70" font-family="&quot;Liberation Sans&quot;, sans-serif" font-size="10.30" fill="#888888" text-anchor="middle" textLength="26.70" lengthAdjust="spacingAndGlyphs">+210</text>
<circle cx="1403.8" cy="322.4" r="0.9" fill="none" stroke="#888888" stroke-width="0.6"/>
<text x="1289.02" y="329.70" font-family="&quot;Liberation Sans&quot;, sans-serif" font-size="10.30" fill="#888888" text-anchor="middle" textLength="26.70" lengthAdjust="spacingAndGlyphs">+240</text>
<circle cx="1306.2" cy="322.4" r="0.9" fill="none" stroke="#888888" stroke-width="0.6"/>
<text x="1191.49" y="329.70" font-family="&quot;Liberation Sans&quot;, sans-serif" font-size="10.30" fill="#888888" text-anchor="middle" textLength="26.70" lengthAdjust="spacingAndGlyphs">+270</text>
<circle cx="1208.7" cy="322.4" r="0.9" fill="none" stroke="#888888" stroke-width="0.6"/>
<text x="1093.96" y="329.70" font-family="&quot;Liberation Sans&quot;, sans-serif" font-size="10.30" fill="#888888" text-anchor="middle" textLength="26.70" lengthAdjust="spacingAndGlyphs">+300</text>
<circle cx="1111.2" cy="322.4" r="0.9" fill="none" stroke="#888888" stroke-width="0.6"/>
<text x="996.43" y="329.70" font-family="&quot;Liberation Sans&quot;, sans-serif" font-size="10.30" fill="#888888" text-anchor="middle" textLength="26.70" lengthAdjust="spacingAndGlyphs">+330</text>
<circle cx="1013.6" cy="322.4" r="0.9" fill="none" stroke="#888888" stroke-width="0.6"/>
<text x="898.90" y="329.70" font-family="&quot;Liberation Sans&quot;, sans-serif" font-size="10.30" fill="#888888" text-anchor="middle" textLength="14.33" lengthAdjust="spacingAndGlyphs">+0</text>
<circle cx="909.9" cy="322.4" r="0.9" fill="none" stroke="#888888" stroke-width="0.6"/>
<text x="801.37" y="329.70" font-family="&quot;Liberation Sans&quot;, sans-serif" font-size="10.30" fill="#888888" text-anchor="middle" textLength="20.51" lengthAdjust="spacingAndGlyphs">+30</text>
<circle cx="815.5" cy="322.4" r="0.9" fill="none" stroke="#888888" stroke-width="0.6"/>
<text x="703.84" y="329.70" font-family="&quot;Liberation Sans&quot;, sans-serif" font-size="10.30" fill="#888888" text-anchor="middle" textLength="20.51" lengthAdjust="spacingAndGlyphs">+60</text>
<circle cx="718.0" cy="322.4" r="0.9" fill="none" stroke="#888888" stroke-width="0.6"/>
<text x="606.31" y="329.70" font-family="&quot;Liberation Sans&quot;, sans-serif" font-size="10.30" fill="#888888" text-anchor="middle" textLength="20.51" lengthAdjust="spacingAndGlyphs">+90</text>
<circle cx="620.4" cy="322.4" r="0.9" fill="none" stroke="#888888" stroke-width="0.6"/>
<text x="508.78" y="329.70" font-family="&quot;Liberation Sans&quot;, sans-serif" font-size="10.30" fill="#888888" text-anchor="middle" textLength="26.70" lengthAdjust="spacingAndGlyphs">+120</text>
<circle cx="526.0" cy="322.4" r="0.9" fill="none" stroke="#888888" stroke-width="0.6"/>
<text x="411.25" y="329.70" font-family="&quot;Liberation Sans&quot;, sans-serif" font-size="10.30" fill="#888888" text-anchor="middle" textLength="26.70" lengthAdjust="spacingAndGlyphs">+150</text>
<circle cx="428.5" cy="322.4" r="0.9" fill="none" stroke="#888888" stroke-width="0.6"/>
<text x="313.72" y="329.70" font-family="&quot;Liberation Sans&quot;, sans-serif" font-size="10.30" fill="#888888" text-anchor="middle" textLength="26.70" lengthAdjust="spacingAndGlyphs">+180</text>
<circle cx="330.9" cy="322.4" r="0.9" fill="none" stroke="#888888" stroke-width="0.6"/>
<text x="900.30" y="24.50" font-family="&quot;Liberation Sans&quot;, sans-serif" font-size="10.30" fill="#888888" text-anchor="middle" textLength="20.51" lengthAdjust="spacingAndGlyphs">+90</text>
<circle cx="914.4" cy="17.2" r="0.9" fill="none" stroke="#888888" stroke-width="0.6"/>
<text x="900.30" y="122.30" font-family="&quot;Liberation Sans&quot;, sans-serif" font-size="10.30" fill="#888888" text-anchor="middle" textLength="20.51" lengthAdjust="spacingAndGlyphs">+60</text>
<circle cx="914.4" cy="115.0" r="0.9" fill="none" stroke="#888888" stroke-width="0.6"/>
<text x="900.30" y="221.00" font-family="&quot;Liberation Sans&quot;, sans-serif" font-size="10.30" fill="#888888" text-anchor="middle" textLength="20.51" lengthAdjust="spacingAndGlyphs">+30</text>
<circle cx="914.4" cy="213.7" r="0.9" fill="none" stroke="#888888" stroke-width="0.6"/>
<text x="900.30" y="428.00" font-family="&quot;Liberation Sans&quot;, sans-serif" font-size="10.30" fill="#888888" text-anchor="middle" textLength="20.51" lengthAdjust="spacingAndGlyphs">−30</text>
<circle cx="914.4" cy="420.7" r="0.9" fill="none" stroke="#888888" stroke-width="0.6"/>
<text x="900.30" y="526.00" font-family="&quot;Liberation Sans&quot;, sans-serif" font-size="10.30" fill="#888888" text-anchor="middle" textLength="20.51" lengthAdjust="spacingAndGlyphs">−60</text>
<circle cx="914.4" cy="518.7" r="0.9" fill="none" stroke="#888888" stroke-width="0.6"/>
<text x="900.30" y="623.50" font-family="&quot;Liberation Sans&quot;, sans-serif" font-size="10.30" fill="#888888" text-anchor="middle" textLength="20.51" lengthAdjust="spacingAndGlyphs">−90</text>
<circle cx="914.4" cy="616.2" r="0.9" fill="none" stroke="#888888" stroke-width="0.6"/>
<path d="M482.5,242.8 L560.0,190.0 L654.7,144.2" fill="none" stroke="#606060" stroke-width="1.2" stroke-dasharray="1.4 2.3" opacity="0.6"/>
<path d="M718.1,237.8 L730.3,210.9 L749.9,174.3 L771.7,145.8 L790.2,124.1 L835.9,74.1 L846.1,64.3 L856.3,53.7 L861.0,47.9 L861.7,44.6 L858.3,43.7 L854.6,43.9 L847.4,45.0" fill="none" stroke="#7ad151" stroke-width="1.4" stroke-dasharray="1.4 2.3" opacity="1"/>
<path d="M699.0,309.0 L740.1,248.8 L763.3,223.2 L817.1,174.3 L878.3,129.0 L904.8,115.2" fill="none" stroke="#bddf26" stroke-width="1.4" stroke-dasharray="1.4 2.3" opacity="1"/>
<path d="M904.8,115.2 L910.3,113.7" fill="none" stroke="#bddf26" stroke-width="2" opacity="1"/>
<circle cx="910.3" cy="113.7" r="1.3" fill="#ff5a2a"/>
<path d="M667.0,189.0 L707.5,157.0" fill="none" stroke="#1e9b8a" stroke-width="1.4" stroke-dasharray="1.4 2.3" opacity="1"/>
<circle cx="707.6" cy="157" r="1.4" fill="#ff7a4a"/>
<path d="M962.9,45.9 L978.8,55.0" fill="none" stroke="#7ad151" stroke-width="1.4" stroke-dasharray="1.4 2.3" opacity="1"/>
<path d="M978.8,55.0 L1039.9,86.2" fill="none" stroke="#6ecf4f" stroke-width="2" opacity="1"/>
<circle cx="1040" cy="86.2" r="1.3" fill="#ff5a2a"/>
<path d="M873.6,60.3 Q884,62 891.3,69.1" fill="none" stroke="#9a9a9a" stroke-width="1.2"/>
<g fill="none" stroke-width="2.2">
<ellipse cx="671.5" cy="205.2" rx="37.5" ry="15.5" transform="rotate(-34.5 671.5 205.2)" stroke="#1e9b8a"/>
<ellipse cx="718.2" cy="237.8" rx="30.7" ry="18.6" transform="rotate(-39 718.2 237.8)" stroke="#7ad151"/>
<ellipse cx="698" cy="309.4" rx="24" ry="24" stroke="#bddf26"/>
</g>
<path d="M714.0,239H721.0M717.5,235.5V242.5" stroke="#ff0000" stroke-width="1.3"/>
<path d="M696.0,309.4H703.0M699.5,305.9V312.9" stroke="#ff0000" stroke-width="1.3"/>
<path d="M652.6,204.8 V201.5 H655.8" fill="none" stroke="#ff0000" stroke-width="1.3"/>
<text x="671.60" y="207.80" font-family="&quot;Liberation Sans&quot;, sans-serif" font-size="11.05" fill="#ffffff" text-anchor="middle" textLength="21.33" lengthAdjust="spacingAndGlyphs">THA</text>
<text x="717.50" y="240.80" font-family="&quot;Liberation Sans&quot;, sans-serif" font-size="11.05" fill="#ffffff" text-anchor="middle" textLength="20.48" lengthAdjust="spacingAndGlyphs">NTA</text>
<text x="698.00" y="312.60" font-family="&quot;Liberation Sans&quot;, sans-serif" font-size="11.05" fill="#ffffff" text-anchor="middle" textLength="22.03" lengthAdjust="spacingAndGlyphs">OER</text>
<g font-family="&quot;Liberation Mono&quot;, monospace" font-size="13.89" fill="#ffffff" xml:space="preserve">
<text x="316" y="30.00" textLength="50.17" lengthAdjust="spacingAndGlyphs">PL0005</text>
<text x="316" y="43.10" textLength="317.77" lengthAdjust="spacingAndGlyphs">Beg: 20251118 19:37:54 (sol = 236.36°)</text>
<text x="316" y="56.20" textLength="317.77" lengthAdjust="spacingAndGlyphs">End: 20251118 20:15:23 (sol = 236.39°)</text>
<text x="316" y="69.30" textLength="317.77" lengthAdjust="spacingAndGlyphs">--------------------------------------</text>
<text x="316" y="82.40" textLength="50.17" lengthAdjust="spacingAndGlyphs">...: 1</text>
<text x="316" y="95.50" textLength="50.17" lengthAdjust="spacingAndGlyphs">NTA: 1</text>
<text x="316" y="108.60" textLength="50.17" lengthAdjust="spacingAndGlyphs">OER: 1</text>
<text x="316" y="121.70" textLength="50.17" lengthAdjust="spacingAndGlyphs">THA: 1</text>
</g>
<text transform="translate(149.1,642.0) rotate(-90)" x="0" y="0" font-family="&quot;Liberation Sans&quot;, sans-serif" font-size="30.84" fill="#5c5c5c" text-anchor="end" textLength="55.06" lengthAdjust="spacingAndGlyphs">APR</text>
<text transform="translate(295,644.2) rotate(-90)" x="0" y="0" font-family="&quot;Liberation Sans&quot;, sans-serif" font-size="30.84" fill="#5c5c5c" text-anchor="end" textLength="57.78" lengthAdjust="spacingAndGlyphs">MAY</text>
<text transform="translate(436,641.0) rotate(-90)" x="0" y="0" font-family="&quot;Liberation Sans&quot;, sans-serif" font-size="30.84" fill="#5c5c5c" text-anchor="end" textLength="49.31" lengthAdjust="spacingAndGlyphs">JUN</text>
<text transform="translate(577.8,641.5) rotate(-90)" x="0" y="0" font-family="&quot;Liberation Sans&quot;, sans-serif" font-size="30.84" fill="#5c5c5c" text-anchor="end" textLength="44.00" lengthAdjust="spacingAndGlyphs">JUL</text>
<text transform="translate(724.4,642.0) rotate(-90)" x="0" y="0" font-family="&quot;Liberation Sans&quot;, sans-serif" font-size="30.84" fill="#5c5c5c" text-anchor="end" textLength="60.86" lengthAdjust="spacingAndGlyphs">AUG</text>
<text transform="translate(872.2,642.0) rotate(-90)" x="0" y="0" font-family="&quot;Liberation Sans&quot;, sans-serif" font-size="30.84" fill="#5c5c5c" text-anchor="end" textLength="51.94" lengthAdjust="spacingAndGlyphs">SEP</text>
<text transform="translate(1017.5,642.5) rotate(-90)" x="0" y="0" font-family="&quot;Liberation Sans&quot;, sans-serif" font-size="30.84" fill="#5c5c5c" text-anchor="end" textLength="58.23" lengthAdjust="spacingAndGlyphs">OCT</text>
<text transform="translate(1171.1,642.0) rotate(-90)" x="0" y="0" font-family="&quot;Liberation Sans&quot;, sans-serif" font-size="30.84" fill="#5c5c5c" text-anchor="end" textLength="61.16" lengthAdjust="spacingAndGlyphs">NOV</text>
<text transform="translate(1319.7,642.0) rotate(-90)" x="0" y="0" font-family="&quot;Liberation Sans&quot;, sans-serif" font-size="30.84" fill="#5c5c5c" text-anchor="end" textLength="58.34" lengthAdjust="spacingAndGlyphs">DEC</text>
<text transform="translate(1469.3,640.7) rotate(-90)" x="0" y="0" font-family="&quot;Liberation Sans&quot;, sans-serif" font-size="30.84" fill="#5c5c5c" text-anchor="end" textLength="47.49" lengthAdjust="spacingAndGlyphs">JAN</text>
<text transform="translate(1627.8,645.0) rotate(-90)" x="0" y="0" font-family="&quot;Liberation Sans&quot;, sans-serif" font-size="30.84" fill="#5c5c5c" text-anchor="end" textLength="52.59" lengthAdjust="spacingAndGlyphs">FEB</text>
<text transform="translate(1765.6,644.0) rotate(-90)" x="0" y="0" font-family="&quot;Liberation Sans&quot;, sans-serif" font-size="30.84" fill="#5c5c5c" text-anchor="end" textLength="62.27" lengthAdjust="spacingAndGlyphs">MAR</text>
<g>
<rect x="106" y="832" width="24" height="4" fill="#bddf26"/>
<rect x="165" y="832" width="180" height="4" fill="#bddf26"/>
<rect x="366" y="832" width="259" height="4" fill="#bddf26"/>
<rect x="636" y="832" width="151" height="4" fill="#bddf26"/>
<rect x="807" y="832" width="93" height="4" fill="#bddf26"/>
<rect x="920" y="832" width="53" height="4" fill="#bddf26"/>
<rect x="984" y="832" width="82" height="4" fill="#bddf26"/>
<rect x="1082" y="832" width="122" height="4" fill="#bddf26"/>
<rect x="1244" y="832" width="82" height="4" fill="#bddf26"/>
<rect x="1337" y="832" width="19" height="4" fill="#bddf26"/>
<rect x="1381" y="832" width="63" height="4" fill="#bddf26"/>
<rect x="1459" y="832" width="53" height="4" fill="#bddf26"/>
<rect x="1523" y="832" width="24" height="4" fill="#bddf26"/>
<rect x="1724" y="832" width="24" height="4" fill="#bddf26"/>
<rect x="1758" y="832" width="24" height="4" fill="#bddf26"/>
<rect x="165" y="816" width="24" height="4" fill="#81d34d"/>
<rect x="224" y="816" width="63" height="4" fill="#81d34d"/>
<rect x="312" y="816" width="29" height="4" fill="#81d34d"/>
<rect x="366" y="816" width="127" height="4" fill="#81d34d"/>
<rect x="508" y="816" width="146" height="4" fill="#81d34d"/>
<rect x="704" y="816" width="34" height="4" fill="#81d34d"/>
<rect x="773" y="816" width="73" height="4" fill="#81d34d"/>
<rect x="871" y="816" width="117" height="4" fill="#81d34d"/>
<rect x="1003" y="816" width="14" height="4" fill="#81d34d"/>
<rect x="1062" y="816" width="151" height="4" fill="#81d34d"/>
<rect x="1244" y="816" width="23" height="4" fill="#81d34d"/>
<rect x="1293" y="816" width="23" height="4" fill="#81d34d"/>
<rect x="1342" y="816" width="23" height="4" fill="#81d34d"/>
<rect x="1386" y="816" width="43" height="4" fill="#81d34d"/>
<rect x="1459" y="816" width="24" height="4" fill="#81d34d"/>
<rect x="1548" y="816" width="23" height="4" fill="#81d34d"/>
<rect x="165" y="800" width="24" height="4" fill="#4ec36b"/>
<rect x="258" y="800" width="230" height="4" fill="#4ec36b"/>
<rect x="508" y="800" width="107" height="4" fill="#4ec36b"/>
<rect x="626" y="800" width="92" height="4" fill="#4ec36b"/>
<rect x="729" y="800" width="97" height="4" fill="#4ec36b"/>
<rect x="949" y="800" width="201" height="4" fill="#4ec36b"/>
<rect x="1160" y="800" width="88" height="4" fill="#4ec36b"/>
<rect x="1258" y="800" width="186" height="4" fill="#4ec36b"/>
<rect x="1459" y="800" width="24" height="4" fill="#4ec36b"/>
<rect x="1553" y="800" width="23" height="4" fill="#4ec36b"/>
<rect x="194" y="783" width="24" height="4" fill="#2ab07f"/>
<rect x="322" y="783" width="185" height="4" fill="#2ab07f"/>
<rect x="518" y="783" width="24" height="4" fill="#2ab07f"/>
<rect x="557" y="783" width="127" height="4" fill="#2ab07f"/>
<rect x="807" y="783" width="24" height="4" fill="#2ab07f"/>
<rect x="954" y="783" width="19" height="4" fill="#2ab07f"/>
<rect x="989" y="783" width="136" height="4" fill="#2ab07f"/>
<rect x="1155" y="783" width="63" height="4" fill="#2ab07f"/>
<rect x="1244" y="783" width="23" height="4" fill="#2ab07f"/>
<rect x="1317" y="783" width="24" height="4" fill="#2ab07f"/>
<rect x="1396" y="783" width="23" height="4" fill="#2ab07f"/>
<rect x="1464" y="783" width="186" height="4" fill="#2ab07f"/>
<rect x="341" y="767" width="29" height="4" fill="#1e9b8a"/>
<rect x="410" y="767" width="38" height="4" fill="#1e9b8a"/>
<rect x="469" y="767" width="24" height="4" fill="#1e9b8a"/>
<rect x="528" y="767" width="18" height="4" fill="#1e9b8a"/>
<rect x="562" y="767" width="29" height="4" fill="#1e9b8a"/>
<rect x="616" y="767" width="33" height="4" fill="#1e9b8a"/>
<rect x="959" y="767" width="29" height="4" fill="#1e9b8a"/>
<rect x="1062" y="767" width="24" height="4" fill="#1e9b8a"/>
<rect x="1101" y="767" width="24" height="4" fill="#1e9b8a"/>
<rect x="1160" y="767" width="34" height="4" fill="#1e9b8a"/>
<rect x="1249" y="767" width="23" height="4" fill="#1e9b8a"/>
<rect x="1425" y="767" width="87" height="4" fill="#1e9b8a"/>
<rect x="420" y="750" width="24" height="4" fill="#25858e"/>
<rect x="533" y="750" width="23" height="4" fill="#25858e"/>
<rect x="567" y="750" width="24" height="4" fill="#25858e"/>
<rect x="621" y="750" width="122" height="4" fill="#25858e"/>
<rect x="969" y="750" width="166" height="4" fill="#25858e"/>
<rect x="1185" y="750" width="161" height="4" fill="#25858e"/>
<rect x="1469" y="750" width="24" height="4" fill="#25858e"/>
<rect x="430" y="734" width="23" height="4" fill="#2d708e"/>
<rect x="577" y="734" width="156" height="4" fill="#2d708e"/>
<rect x="994" y="734" width="111" height="4" fill="#2d708e"/>
<rect x="1116" y="734" width="107" height="4" fill="#2d708e"/>
<rect x="1263" y="734" width="29" height="4" fill="#2d708e"/>
<rect x="1489" y="734" width="23" height="4" fill="#2d708e"/>
<rect x="592" y="718" width="23" height="4" fill="#375a8c"/>
<rect x="655" y="718" width="117" height="4" fill="#375a8c"/>
<rect x="1072" y="718" width="171" height="4" fill="#375a8c"/>
<rect x="1263" y="718" width="24" height="4" fill="#375a8c"/>
<rect x="596" y="701" width="137" height="4" fill="#424086"/>
<rect x="1092" y="701" width="28" height="4" fill="#424086"/>
<rect x="1200" y="701" width="23" height="4" fill="#424086"/>
<rect x="1273" y="701" width="53" height="4" fill="#424086"/>
<rect x="1111" y="685" width="24" height="4" fill="#482475"/>
</g>
<g stroke="#ffffff" stroke-opacity="0.3" stroke-width="2.08" stroke-dasharray="2.08 3.44" fill="none">
<path d="M75,641.5 V842.5"/>
<path d="M219,641.5 V842.5"/>
<path d="M365.3,641.5 V842.5"/>
<path d="M506.1,641.5 V842.5"/>
<path d="M651.2,641.5 V842.5"/>
<path d="M796.8,641.5 V842.5"/>
<path d="M940.1,641.5 V842.5"/>
<path d="M1091,641.5 V842.5"/>
<path d="M1239,641.5 V842.5"/>
<path d="M1394,641.5 V842.5"/>
<path d="M1547.8,641.5 V842.5"/>
<path d="M1686.8,641.5 V842.5"/>
</g>
<path d="M1179.4,641.5 V842.5" stroke="#ff0000" stroke-width="1.6" stroke-dasharray="5.2 2.3"/>
<g stroke="#ffffff" stroke-width="2.2" fill="none">
<path d="M114,834H122M118,830.2V837.8"/>
<path d="M241,834H249M245,830.2V837.8"/>
<path d="M511,834H519M515,830.2V837.8"/>
<path d="M707,834H715M711,830.2V837.8"/>
<path d="M834,834H842M838,830.2V837.8"/>
<path d="M962,834H970M966,830.2V837.8"/>
<path d="M987,834H995M991,830.2V837.8"/>
<path d="M1117,834H1125M1121,830.2V837.8"/>
<path d="M1296,834H1304M1300,830.2V837.8"/>
<path d="M1341.5,834H1349.5M1345.5,830.2V837.8"/>
<path d="M1413,834H1421M1417,830.2V837.8"/>
<path d="M1481.5,834H1489.5M1485.5,830.2V837.8"/>
<path d="M1531,834H1539M1535,830.2V837.8"/>
<path d="M1732,834H1740M1736,830.2V837.8"/>
<path d="M1766,834H1774M1770,830.2V837.8"/>
<path d="M172.6,818H180.6M176.6,814.2V821.8"/>
<path d="M255.7,818H263.7M259.7,814.2V821.8"/>
<path d="M324,818H332M328,814.2V821.8"/>
<path d="M438,818H446M442,814.2V821.8"/>
<path d="M599,818H607M603,814.2V821.8"/>
<path d="M717,818H725M721,814.2V821.8"/>
<path d="M794,818H802M798,814.2V821.8"/>
<path d="M940,818H948M944,814.2V821.8"/>
<path d="M1006,818H1014M1010,814.2V821.8"/>
<path d="M1153,818H1161M1157,814.2V821.8"/>
<path d="M1251,818H1259M1255,814.2V821.8"/>
<path d="M1300,818H1308M1304,814.2V821.8"/>
<path d="M1350,818H1358M1354,814.2V821.8"/>
<path d="M1403,818H1411M1407,814.2V821.8"/>
<path d="M1467,818H1475M1471,814.2V821.8"/>
<path d="M1555,818H1563M1559,814.2V821.8"/>
<path d="M175,802H183M179,798.2V805.8"/>
<path d="M379,802H387M383,798.2V805.8"/>
<path d="M545,802H553M549,798.2V805.8"/>
<path d="M683,802H691M687,798.2V805.8"/>
<path d="M742,802H750M746,798.2V805.8"/>
<path d="M1075,802H1083M1079,798.2V805.8"/>
<path d="M1217,802H1225M1221,798.2V805.8"/>
<path d="M1305,802H1313M1309,798.2V805.8"/>
<path d="M1467,802H1475M1471,798.2V805.8"/>
<path d="M1560,802H1568M1564,798.2V805.8"/>
<path d="M202,785H210M206,781.2V788.8"/>
<path d="M401,785H409M405,781.2V788.8"/>
<path d="M526,785H534M530,781.2V788.8"/>
<path d="M639,785H647M643,781.2V788.8"/>
<path d="M815,785H823M819,781.2V788.8"/>
<path d="M960,785H968M964,781.2V788.8"/>
<path d="M1041,785H1049M1045,781.2V788.8"/>
<path d="M1188,785H1196M1192,781.2V788.8"/>
<path d="M1251,785H1259M1255,781.2V788.8"/>
<path d="M1325,785H1333M1329,781.2V788.8"/>
<path d="M1403,785H1411M1407,781.2V788.8"/>
<path d="M1546,785H1554M1550,781.2V788.8"/>
<path d="M356,769H364M360,765.2V772.8"/>
<path d="M427,769H435M431,765.2V772.8"/>
<path d="M477,769H485M481,765.2V772.8"/>
<path d="M536,769H544M540,765.2V772.8"/>
<path d="M571,769H579M575,765.2V772.8"/>
<path d="M631,769H639M635,765.2V772.8"/>
<path d="M974,769H982M978,765.2V772.8"/>
<path d="M1070,769H1078M1074,765.2V772.8"/>
<path d="M1109,769H1117M1113,765.2V772.8"/>
<path d="M1178,769H1186M1182,765.2V772.8"/>
<path d="M1256,769H1264M1260,765.2V772.8"/>
<path d="M1467,769H1475M1471,765.2V772.8"/>
<path d="M428,752H436M432,748.2V755.8"/>
<path d="M540,752H548M544,748.2V755.8"/>
<path d="M575,752H583M579,748.2V755.8"/>
<path d="M704,752H712M708,748.2V755.8"/>
<path d="M1095,752H1103M1099,748.2V755.8"/>
<path d="M1271,752H1279M1275,748.2V755.8"/>
<path d="M1477,752H1485M1481,748.2V755.8"/>
<path d="M438,736H446M442,732.2V739.8"/>
<path d="M631,736H639M635,732.2V739.8"/>
<path d="M1039,736H1047M1043,732.2V739.8"/>
<path d="M1168,736H1176M1172,732.2V739.8"/>
<path d="M1275,736H1283M1279,732.2V739.8"/>
<path d="M1497,736H1505M1501,732.2V739.8"/>
<path d="M599,720H607M603,716.2V723.8"/>
<path d="M727,720H735M731,716.2V723.8"/>
<path d="M1188,720H1196M1192,716.2V723.8"/>
<path d="M1271,720H1279M1275,716.2V723.8"/>
<path d="M688,703H696M692,699.2V706.8"/>
<path d="M1102,703H1110M1106,699.2V706.8"/>
<path d="M1207,703H1215M1211,699.2V706.8"/>
<path d="M1300,703H1308M1304,699.2V706.8"/>
<path d="M1119,687H1127M1123,683.2V690.8"/>
</g>
<text x="117.20" y="831.80" font-family="&quot;Liberation Sans&quot;, sans-serif" font-size="11.05" fill="#ffffff" text-anchor="middle" textLength="20.03" lengthAdjust="spacingAndGlyphs">KSE</text>
<text x="255.10" y="831.80" font-family="&quot;Liberation Sans&quot;, sans-serif" font-size="11.05" fill="#ffffff" text-anchor="middle" textLength="19.27" lengthAdjust="spacingAndGlyphs">ETA</text>
<text x="495.50" y="831.80" font-family="&quot;Liberation Sans&quot;, sans-serif" font-size="11.05" fill="#ffffff" text-anchor="middle" textLength="22.21" lengthAdjust="spacingAndGlyphs">NZC</text>
<text x="710.90" y="831.80" font-family="&quot;Liberation Sans&quot;, sans-serif" font-size="11.05" fill="#ffffff" text-anchor="middle" textLength="22.76" lengthAdjust="spacingAndGlyphs">NDA</text>
<text x="853.90" y="831.80" font-family="&quot;Liberation Sans&quot;, sans-serif" font-size="11.05" fill="#ffffff" text-anchor="middle" textLength="19.48" lengthAdjust="spacingAndGlyphs">SPE</text>
<text x="946.20" y="831.80" font-family="&quot;Liberation Sans&quot;, sans-serif" font-size="11.05" fill="#ffffff" text-anchor="middle" textLength="22.39" lengthAdjust="spacingAndGlyphs">ARD</text>
<text x="1024.90" y="831.80" font-family="&quot;Liberation Sans&quot;, sans-serif" font-size="11.05" fill="#ffffff" text-anchor="middle" textLength="21.24" lengthAdjust="spacingAndGlyphs">EGE</text>
<text x="1142.40" y="831.80" font-family="&quot;Liberation Sans&quot;, sans-serif" font-size="11.05" fill="#ffffff" text-anchor="middle" textLength="20.48" lengthAdjust="spacingAndGlyphs">NTA</text>
<text x="1285.00" y="831.80" font-family="&quot;Liberation Sans&quot;, sans-serif" font-size="11.05" fill="#ffffff" text-anchor="middle" textLength="24.99" lengthAdjust="spacingAndGlyphs">MON</text>
<text x="1343.30" y="831.80" font-family="&quot;Liberation Sans&quot;, sans-serif" font-size="11.05" fill="#ffffff" text-anchor="middle" textLength="21.48" lengthAdjust="spacingAndGlyphs">URS</text>
<text x="1411.70" y="831.80" font-family="&quot;Liberation Sans&quot;, sans-serif" font-size="11.05" fill="#ffffff" text-anchor="middle" textLength="21.33" lengthAdjust="spacingAndGlyphs">AHY</text>
<text x="1485.50" y="831.80" font-family="&quot;Liberation Sans&quot;, sans-serif" font-size="11.05" fill="#ffffff" text-anchor="middle" textLength="24.69" lengthAdjust="spacingAndGlyphs">GUM</text>
<text x="1535.60" y="831.80" font-family="&quot;Liberation Sans&quot;, sans-serif" font-size="11.05" fill="#ffffff" text-anchor="middle" textLength="22.40" lengthAdjust="spacingAndGlyphs">OHY</text>
<text x="1736.00" y="831.80" font-family="&quot;Liberation Sans&quot;, sans-serif" font-size="11.05" fill="#ffffff" text-anchor="middle" textLength="21.56" lengthAdjust="spacingAndGlyphs">XHE</text>
<text x="1769.50" y="831.80" font-family="&quot;Liberation Sans&quot;, sans-serif" font-size="11.05" fill="#ffffff" text-anchor="middle" textLength="16.78" lengthAdjust="spacingAndGlyphs">EVI</text>
<text x="176.40" y="815.80" font-family="&quot;Liberation Sans&quot;, sans-serif" font-size="11.05" fill="#ffffff" text-anchor="middle" textLength="20.74" lengthAdjust="spacingAndGlyphs">AVB</text>
<text x="255.00" y="815.80" font-family="&quot;Liberation Sans&quot;, sans-serif" font-size="11.05" fill="#ffffff" text-anchor="middle" textLength="17.37" lengthAdjust="spacingAndGlyphs">ELY</text>
<text x="323.90" y="815.80" font-family="&quot;Liberation Sans&quot;, sans-serif" font-size="11.05" fill="#ffffff" text-anchor="middle" textLength="23.39" lengthAdjust="spacingAndGlyphs">CAM</text>
<text x="431.80" y="815.80" font-family="&quot;Liberation Sans&quot;, sans-serif" font-size="11.05" fill="#ffffff" text-anchor="middle" textLength="21.30" lengthAdjust="spacingAndGlyphs">SSG</text>
<text x="578.70" y="815.80" font-family="&quot;Liberation Sans&quot;, sans-serif" font-size="11.05" fill="#ffffff" text-anchor="middle" textLength="20.69" lengthAdjust="spacingAndGlyphs">PCA</text>
<text x="721.00" y="815.80" font-family="&quot;Liberation Sans&quot;, sans-serif" font-size="11.05" fill="#ffffff" text-anchor="middle" textLength="22.78" lengthAdjust="spacingAndGlyphs">AUD</text>
<text x="809.40" y="815.80" font-family="&quot;Liberation Sans&quot;, sans-serif" font-size="11.05" fill="#ffffff" text-anchor="middle" textLength="21.99" lengthAdjust="spacingAndGlyphs">AUR</text>
<text x="930.90" y="815.80" font-family="&quot;Liberation Sans&quot;, sans-serif" font-size="11.05" fill="#ffffff" text-anchor="middle" textLength="21.78" lengthAdjust="spacingAndGlyphs">DSX</text>
<text x="1010.70" y="815.80" font-family="&quot;Liberation Sans&quot;, sans-serif" font-size="11.05" fill="#ffffff" text-anchor="middle" textLength="23.10" lengthAdjust="spacingAndGlyphs">OCU</text>
<text x="1138.10" y="815.80" font-family="&quot;Liberation Sans&quot;, sans-serif" font-size="11.05" fill="#ffffff" text-anchor="middle" textLength="22.03" lengthAdjust="spacingAndGlyphs">OER</text>
<text x="1254.90" y="815.80" font-family="&quot;Liberation Sans&quot;, sans-serif" font-size="11.05" fill="#ffffff" text-anchor="middle" textLength="22.88" lengthAdjust="spacingAndGlyphs">DKD</text>
<text x="1304.30" y="815.80" font-family="&quot;Liberation Sans&quot;, sans-serif" font-size="11.05" fill="#ffffff" text-anchor="middle" textLength="21.77" lengthAdjust="spacingAndGlyphs">DSV</text>
<text x="1353.40" y="815.80" font-family="&quot;Liberation Sans&quot;, sans-serif" font-size="11.05" fill="#ffffff" text-anchor="middle" textLength="17.91" lengthAdjust="spacingAndGlyphs">ALY</text>
<text x="1407.50" y="815.80" font-family="&quot;Liberation Sans&quot;, sans-serif" font-size="11.05" fill="#ffffff" text-anchor="middle" textLength="15.46" lengthAdjust="spacingAndGlyphs">JLE</text>
<text x="1471.90" y="815.80" font-family="&quot;Liberation Sans&quot;, sans-serif" font-size="11.05" fill="#ffffff" text-anchor="middle" textLength="21.17" lengthAdjust="spacingAndGlyphs">SCC</text>
<text x="1559.20" y="815.80" font-family="&quot;Liberation Sans&quot;, sans-serif" font-size="11.05" fill="#ffffff" text-anchor="middle" textLength="19.71" lengthAdjust="spacingAndGlyphs">FEV</text>
<text x="176.30" y="799.80" font-family="&quot;Liberation Sans&quot;, sans-serif" font-size="11.05" fill="#ffffff" text-anchor="middle" textLength="18.03" lengthAdjust="spacingAndGlyphs">LYR</text>
<text x="372.70" y="799.80" font-family="&quot;Liberation Sans&quot;, sans-serif" font-size="11.05" fill="#ffffff" text-anchor="middle" textLength="19.34" lengthAdjust="spacingAndGlyphs">JMC</text>
<text x="558.70" y="799.80" font-family="&quot;Liberation Sans&quot;, sans-serif" font-size="11.05" fill="#ffffff" text-anchor="middle" textLength="15.94" lengthAdjust="spacingAndGlyphs">JPE</text>
<text x="671.30" y="799.80" font-family="&quot;Liberation Sans&quot;, sans-serif" font-size="11.05" fill="#ffffff" text-anchor="middle" textLength="20.37" lengthAdjust="spacingAndGlyphs">PAU</text>
<text x="774.40" y="799.80" font-family="&quot;Liberation Sans&quot;, sans-serif" font-size="11.05" fill="#ffffff" text-anchor="middle" textLength="18.00" lengthAdjust="spacingAndGlyphs">NIA</text>
<text x="1049.70" y="799.80" font-family="&quot;Liberation Sans&quot;, sans-serif" font-size="11.05" fill="#ffffff" text-anchor="middle" textLength="19.30" lengthAdjust="spacingAndGlyphs">STA</text>
<text x="1206.50" y="799.80" font-family="&quot;Liberation Sans&quot;, sans-serif" font-size="11.05" fill="#ffffff" text-anchor="middle" textLength="24.20" lengthAdjust="spacingAndGlyphs">NOO</text>
<text x="1353.20" y="799.80" font-family="&quot;Liberation Sans&quot;, sans-serif" font-size="11.05" fill="#ffffff" text-anchor="middle" textLength="24.47" lengthAdjust="spacingAndGlyphs">COM</text>
<text x="1470.50" y="799.80" font-family="&quot;Liberation Sans&quot;, sans-serif" font-size="11.05" fill="#ffffff" text-anchor="middle" textLength="22.35" lengthAdjust="spacingAndGlyphs">NCC</text>
<text x="1564.50" y="799.80" font-family="&quot;Liberation Sans&quot;, sans-serif" font-size="11.05" fill="#ffffff" text-anchor="middle" textLength="20.60" lengthAdjust="spacingAndGlyphs">FED</text>
<text x="206.00" y="782.80" font-family="&quot;Liberation Sans&quot;, sans-serif" font-size="11.05" fill="#ffffff" text-anchor="middle" textLength="18.04" lengthAdjust="spacingAndGlyphs">HVI</text>
<text x="412.00" y="782.80" font-family="&quot;Liberation Sans&quot;, sans-serif" font-size="11.05" fill="#ffffff" text-anchor="middle" textLength="17.44" lengthAdjust="spacingAndGlyphs">ARI</text>
<text x="530.10" y="782.80" font-family="&quot;Liberation Sans&quot;, sans-serif" font-size="11.05" fill="#ffffff" text-anchor="middle" textLength="21.03" lengthAdjust="spacingAndGlyphs">SZC</text>
<text x="618.50" y="782.80" font-family="&quot;Liberation Sans&quot;, sans-serif" font-size="11.05" fill="#ffffff" text-anchor="middle" textLength="20.69" lengthAdjust="spacingAndGlyphs">CAP</text>
<text x="818.40" y="782.80" font-family="&quot;Liberation Sans&quot;, sans-serif" font-size="11.05" fill="#ffffff" text-anchor="middle" textLength="22.01" lengthAdjust="spacingAndGlyphs">NUE</text>
<text x="961.40" y="782.80" font-family="&quot;Liberation Sans&quot;, sans-serif" font-size="11.05" fill="#ffffff" text-anchor="middle" textLength="21.84" lengthAdjust="spacingAndGlyphs">OCT</text>
<text x="1059.40" y="782.80" font-family="&quot;Liberation Sans&quot;, sans-serif" font-size="11.05" fill="#ffffff" text-anchor="middle" textLength="18.51" lengthAdjust="spacingAndGlyphs">ORI</text>
<text x="1186.30" y="782.80" font-family="&quot;Liberation Sans&quot;, sans-serif" font-size="11.05" fill="#ffffff" text-anchor="middle" textLength="24.32" lengthAdjust="spacingAndGlyphs">AMO</text>
<text x="1255.30" y="782.80" font-family="&quot;Liberation Sans&quot;, sans-serif" font-size="11.05" fill="#ffffff" text-anchor="middle" textLength="21.58" lengthAdjust="spacingAndGlyphs">DPC</text>
<text x="1328.90" y="782.80" font-family="&quot;Liberation Sans&quot;, sans-serif" font-size="11.05" fill="#ffffff" text-anchor="middle" textLength="17.34" lengthAdjust="spacingAndGlyphs">XVI</text>
<text x="1407.50" y="782.80" font-family="&quot;Liberation Sans&quot;, sans-serif" font-size="11.05" fill="#ffffff" text-anchor="middle" textLength="22.96" lengthAdjust="spacingAndGlyphs">QUA</text>
<text x="1559.60" y="782.80" font-family="&quot;Liberation Sans&quot;, sans-serif" font-size="11.05" fill="#ffffff" text-anchor="middle" textLength="22.34" lengthAdjust="spacingAndGlyphs">AAN</text>
<text x="352.80" y="766.80" font-family="&quot;Liberation Sans&quot;, sans-serif" font-size="11.05" fill="#ffffff" text-anchor="middle" textLength="20.52" lengthAdjust="spacingAndGlyphs">TAH</text>
<text x="431.00" y="766.80" font-family="&quot;Liberation Sans&quot;, sans-serif" font-size="11.05" fill="#ffffff" text-anchor="middle" textLength="16.78" lengthAdjust="spacingAndGlyphs">JEA</text>
<text x="481.10" y="766.80" font-family="&quot;Liberation Sans&quot;, sans-serif" font-size="11.05" fill="#ffffff" text-anchor="middle" textLength="12.43" lengthAdjust="spacingAndGlyphs">JIP</text>
<text x="538.80" y="766.80" font-family="&quot;Liberation Sans&quot;, sans-serif" font-size="11.05" fill="#ffffff" text-anchor="middle" textLength="19.18" lengthAdjust="spacingAndGlyphs">PPS</text>
<text x="578.70" y="766.80" font-family="&quot;Liberation Sans&quot;, sans-serif" font-size="11.05" fill="#ffffff" text-anchor="middle" textLength="21.03" lengthAdjust="spacingAndGlyphs">ZCS</text>
<text x="632.80" y="766.80" font-family="&quot;Liberation Sans&quot;, sans-serif" font-size="11.05" fill="#ffffff" text-anchor="middle" textLength="23.34" lengthAdjust="spacingAndGlyphs">GDR</text>
<text x="971.10" y="766.80" font-family="&quot;Liberation Sans&quot;, sans-serif" font-size="11.05" fill="#ffffff" text-anchor="middle" textLength="21.97" lengthAdjust="spacingAndGlyphs">DRA</text>
<text x="1073.20" y="766.80" font-family="&quot;Liberation Sans&quot;, sans-serif" font-size="11.05" fill="#ffffff" text-anchor="middle" textLength="21.90" lengthAdjust="spacingAndGlyphs">LUM</text>
<text x="1112.70" y="766.80" font-family="&quot;Liberation Sans&quot;, sans-serif" font-size="11.05" fill="#ffffff" text-anchor="middle" textLength="21.15" lengthAdjust="spacingAndGlyphs">RPU</text>
<text x="1177.20" y="766.80" font-family="&quot;Liberation Sans&quot;, sans-serif" font-size="11.05" fill="#ffffff" text-anchor="middle" textLength="21.33" lengthAdjust="spacingAndGlyphs">THA</text>
<text x="1259.40" y="766.80" font-family="&quot;Liberation Sans&quot;, sans-serif" font-size="11.05" fill="#ffffff" text-anchor="middle" textLength="20.52" lengthAdjust="spacingAndGlyphs">PSU</text>
<text x="1470.70" y="766.80" font-family="&quot;Liberation Sans&quot;, sans-serif" font-size="11.05" fill="#ffffff" text-anchor="middle" textLength="20.80" lengthAdjust="spacingAndGlyphs">XCB</text>
<text x="431.80" y="749.80" font-family="&quot;Liberation Sans&quot;, sans-serif" font-size="11.05" fill="#ffffff" text-anchor="middle" textLength="17.07" lengthAdjust="spacingAndGlyphs">JRC</text>
<text x="544.30" y="749.80" font-family="&quot;Liberation Sans&quot;, sans-serif" font-size="11.05" fill="#ffffff" text-anchor="middle" textLength="22.20" lengthAdjust="spacingAndGlyphs">CAN</text>
<text x="578.00" y="749.80" font-family="&quot;Liberation Sans&quot;, sans-serif" font-size="11.05" fill="#ffffff" text-anchor="middle" textLength="19.96" lengthAdjust="spacingAndGlyphs">FAN</text>
<text x="681.20" y="749.80" font-family="&quot;Liberation Sans&quot;, sans-serif" font-size="11.05" fill="#ffffff" text-anchor="middle" textLength="20.11" lengthAdjust="spacingAndGlyphs">PER</text>
<text x="1050.00" y="749.80" font-family="&quot;Liberation Sans&quot;, sans-serif" font-size="11.05" fill="#ffffff" text-anchor="middle" textLength="19.96" lengthAdjust="spacingAndGlyphs">CTA</text>
<text x="1265.30" y="749.80" font-family="&quot;Liberation Sans&quot;, sans-serif" font-size="11.05" fill="#ffffff" text-anchor="middle" textLength="22.22" lengthAdjust="spacingAndGlyphs">HYD</text>
<text x="1481.10" y="749.80" font-family="&quot;Liberation Sans&quot;, sans-serif" font-size="11.05" fill="#ffffff" text-anchor="middle" textLength="23.76" lengthAdjust="spacingAndGlyphs">XUM</text>
<text x="441.70" y="733.80" font-family="&quot;Liberation Sans&quot;, sans-serif" font-size="11.05" fill="#ffffff" text-anchor="middle" textLength="22.72" lengthAdjust="spacingAndGlyphs">COR</text>
<text x="657.90" y="733.80" font-family="&quot;Liberation Sans&quot;, sans-serif" font-size="11.05" fill="#ffffff" text-anchor="middle" textLength="21.58" lengthAdjust="spacingAndGlyphs">SDA</text>
<text x="1048.90" y="733.80" font-family="&quot;Liberation Sans&quot;, sans-serif" font-size="11.05" fill="#ffffff" text-anchor="middle" textLength="17.87" lengthAdjust="spacingAndGlyphs">LMI</text>
<text x="1166.60" y="733.80" font-family="&quot;Liberation Sans&quot;, sans-serif" font-size="11.05" fill="#ffffff" text-anchor="middle" textLength="20.59" lengthAdjust="spacingAndGlyphs">LEO</text>
<text x="1274.70" y="733.80" font-family="&quot;Liberation Sans&quot;, sans-serif" font-size="11.05" fill="#ffffff" text-anchor="middle" textLength="20.78" lengthAdjust="spacingAndGlyphs">EHY</text>
<text x="1500.80" y="733.80" font-family="&quot;Liberation Sans&quot;, sans-serif" font-size="11.05" fill="#ffffff" text-anchor="middle" textLength="20.99" lengthAdjust="spacingAndGlyphs">ECV</text>
<text x="603.40" y="717.80" font-family="&quot;Liberation Sans&quot;, sans-serif" font-size="11.05" fill="#ffffff" text-anchor="middle" textLength="17.34" lengthAdjust="spacingAndGlyphs">JXA</text>
<text x="716.00" y="717.80" font-family="&quot;Liberation Sans&quot;, sans-serif" font-size="11.05" fill="#ffffff" text-anchor="middle" textLength="21.61" lengthAdjust="spacingAndGlyphs">KCG</text>
<text x="1156.30" y="717.80" font-family="&quot;Liberation Sans&quot;, sans-serif" font-size="11.05" fill="#ffffff" text-anchor="middle" textLength="22.95" lengthAdjust="spacingAndGlyphs">AND</text>
<text x="1274.90" y="717.80" font-family="&quot;Liberation Sans&quot;, sans-serif" font-size="11.05" fill="#ffffff" text-anchor="middle" textLength="22.99" lengthAdjust="spacingAndGlyphs">DAD</text>
<text x="666.40" y="700.80" font-family="&quot;Liberation Sans&quot;, sans-serif" font-size="11.05" fill="#ffffff" text-anchor="middle" textLength="16.90" lengthAdjust="spacingAndGlyphs">ERI</text>
<text x="1108.30" y="700.80" font-family="&quot;Liberation Sans&quot;, sans-serif" font-size="11.05" fill="#ffffff" text-anchor="middle" textLength="20.44" lengthAdjust="spacingAndGlyphs">SLD</text>
<text x="1211.30" y="700.80" font-family="&quot;Liberation Sans&quot;, sans-serif" font-size="11.05" fill="#ffffff" text-anchor="middle" textLength="22.06" lengthAdjust="spacingAndGlyphs">ORS</text>
<text x="1299.90" y="700.80" font-family="&quot;Liberation Sans&quot;, sans-serif" font-size="11.05" fill="#ffffff" text-anchor="middle" textLength="23.65" lengthAdjust="spacingAndGlyphs">GEM</text>
<text x="1122.70" y="684.80" font-family="&quot;Liberation Sans&quot;, sans-serif" font-size="11.05" fill="#ffffff" text-anchor="middle" textLength="23.17" lengthAdjust="spacingAndGlyphs">KUM</text>
<rect x="20.5" y="641.5" width="1765.0" height="201.0" fill="none" stroke="#ffffff" stroke-width="1.1"/>
<g stroke="#ffffff" stroke-width="1.1">
<path d="M20.5,842.5 V846.7"/>
<path d="M265.6,842.5 V846.7"/>
<path d="M510.8,842.5 V846.7"/>
<path d="M755.9,842.5 V846.7"/>
<path d="M1001.1,842.5 V846.7"/>
<path d="M1246.2,842.5 V846.7"/>
<path d="M1491.3,842.5 V846.7"/>
<path d="M1736.5,842.5 V846.7"/>
</g>
<text x="20.50" y="862.00" font-family="&quot;Liberation Sans&quot;, sans-serif" font-size="14.72" fill="#ffffff" text-anchor="middle" textLength="8.84" lengthAdjust="spacingAndGlyphs">0</text>
<text x="265.64" y="862.00" font-family="&quot;Liberation Sans&quot;, sans-serif" font-size="14.72" fill="#ffffff" text-anchor="middle" textLength="17.67" lengthAdjust="spacingAndGlyphs">50</text>
<text x="510.78" y="862.00" font-family="&quot;Liberation Sans&quot;, sans-serif" font-size="14.72" fill="#ffffff" text-anchor="middle" textLength="26.51" lengthAdjust="spacingAndGlyphs">100</text>
<text x="755.92" y="862.00" font-family="&quot;Liberation Sans&quot;, sans-serif" font-size="14.72" fill="#ffffff" text-anchor="middle" textLength="26.51" lengthAdjust="spacingAndGlyphs">150</text>
<text x="1001.06" y="862.00" font-family="&quot;Liberation Sans&quot;, sans-serif" font-size="14.72" fill="#ffffff" text-anchor="middle" textLength="26.51" lengthAdjust="spacingAndGlyphs">200</text>
<text x="1246.19" y="862.00" font-family="&quot;Liberation Sans&quot;, sans-serif" font-size="14.72" fill="#ffffff" text-anchor="middle" textLength="26.51" lengthAdjust="spacingAndGlyphs">250</text>
<text x="1491.33" y="862.00" font-family="&quot;Liberation Sans&quot;, sans-serif" font-size="14.72" fill="#ffffff" text-anchor="middle" textLength="26.51" lengthAdjust="spacingAndGlyphs">300</text>
<text x="1736.47" y="862.00" font-family="&quot;Liberation Sans&quot;, sans-serif" font-size="14.72" fill="#ffffff" text-anchor="middle" textLength="26.51" lengthAdjust="spacingAndGlyphs">350</text>
<text x="902.50" y="881.70" font-family="&quot;Liberation Sans&quot;, sans-serif" font-size="14.72" fill="#ffffff" text-anchor="middle" textLength="146.69" lengthAdjust="spacingAndGlyphs">Solar longitude (deg)</text>
</svg>
</body></html>
